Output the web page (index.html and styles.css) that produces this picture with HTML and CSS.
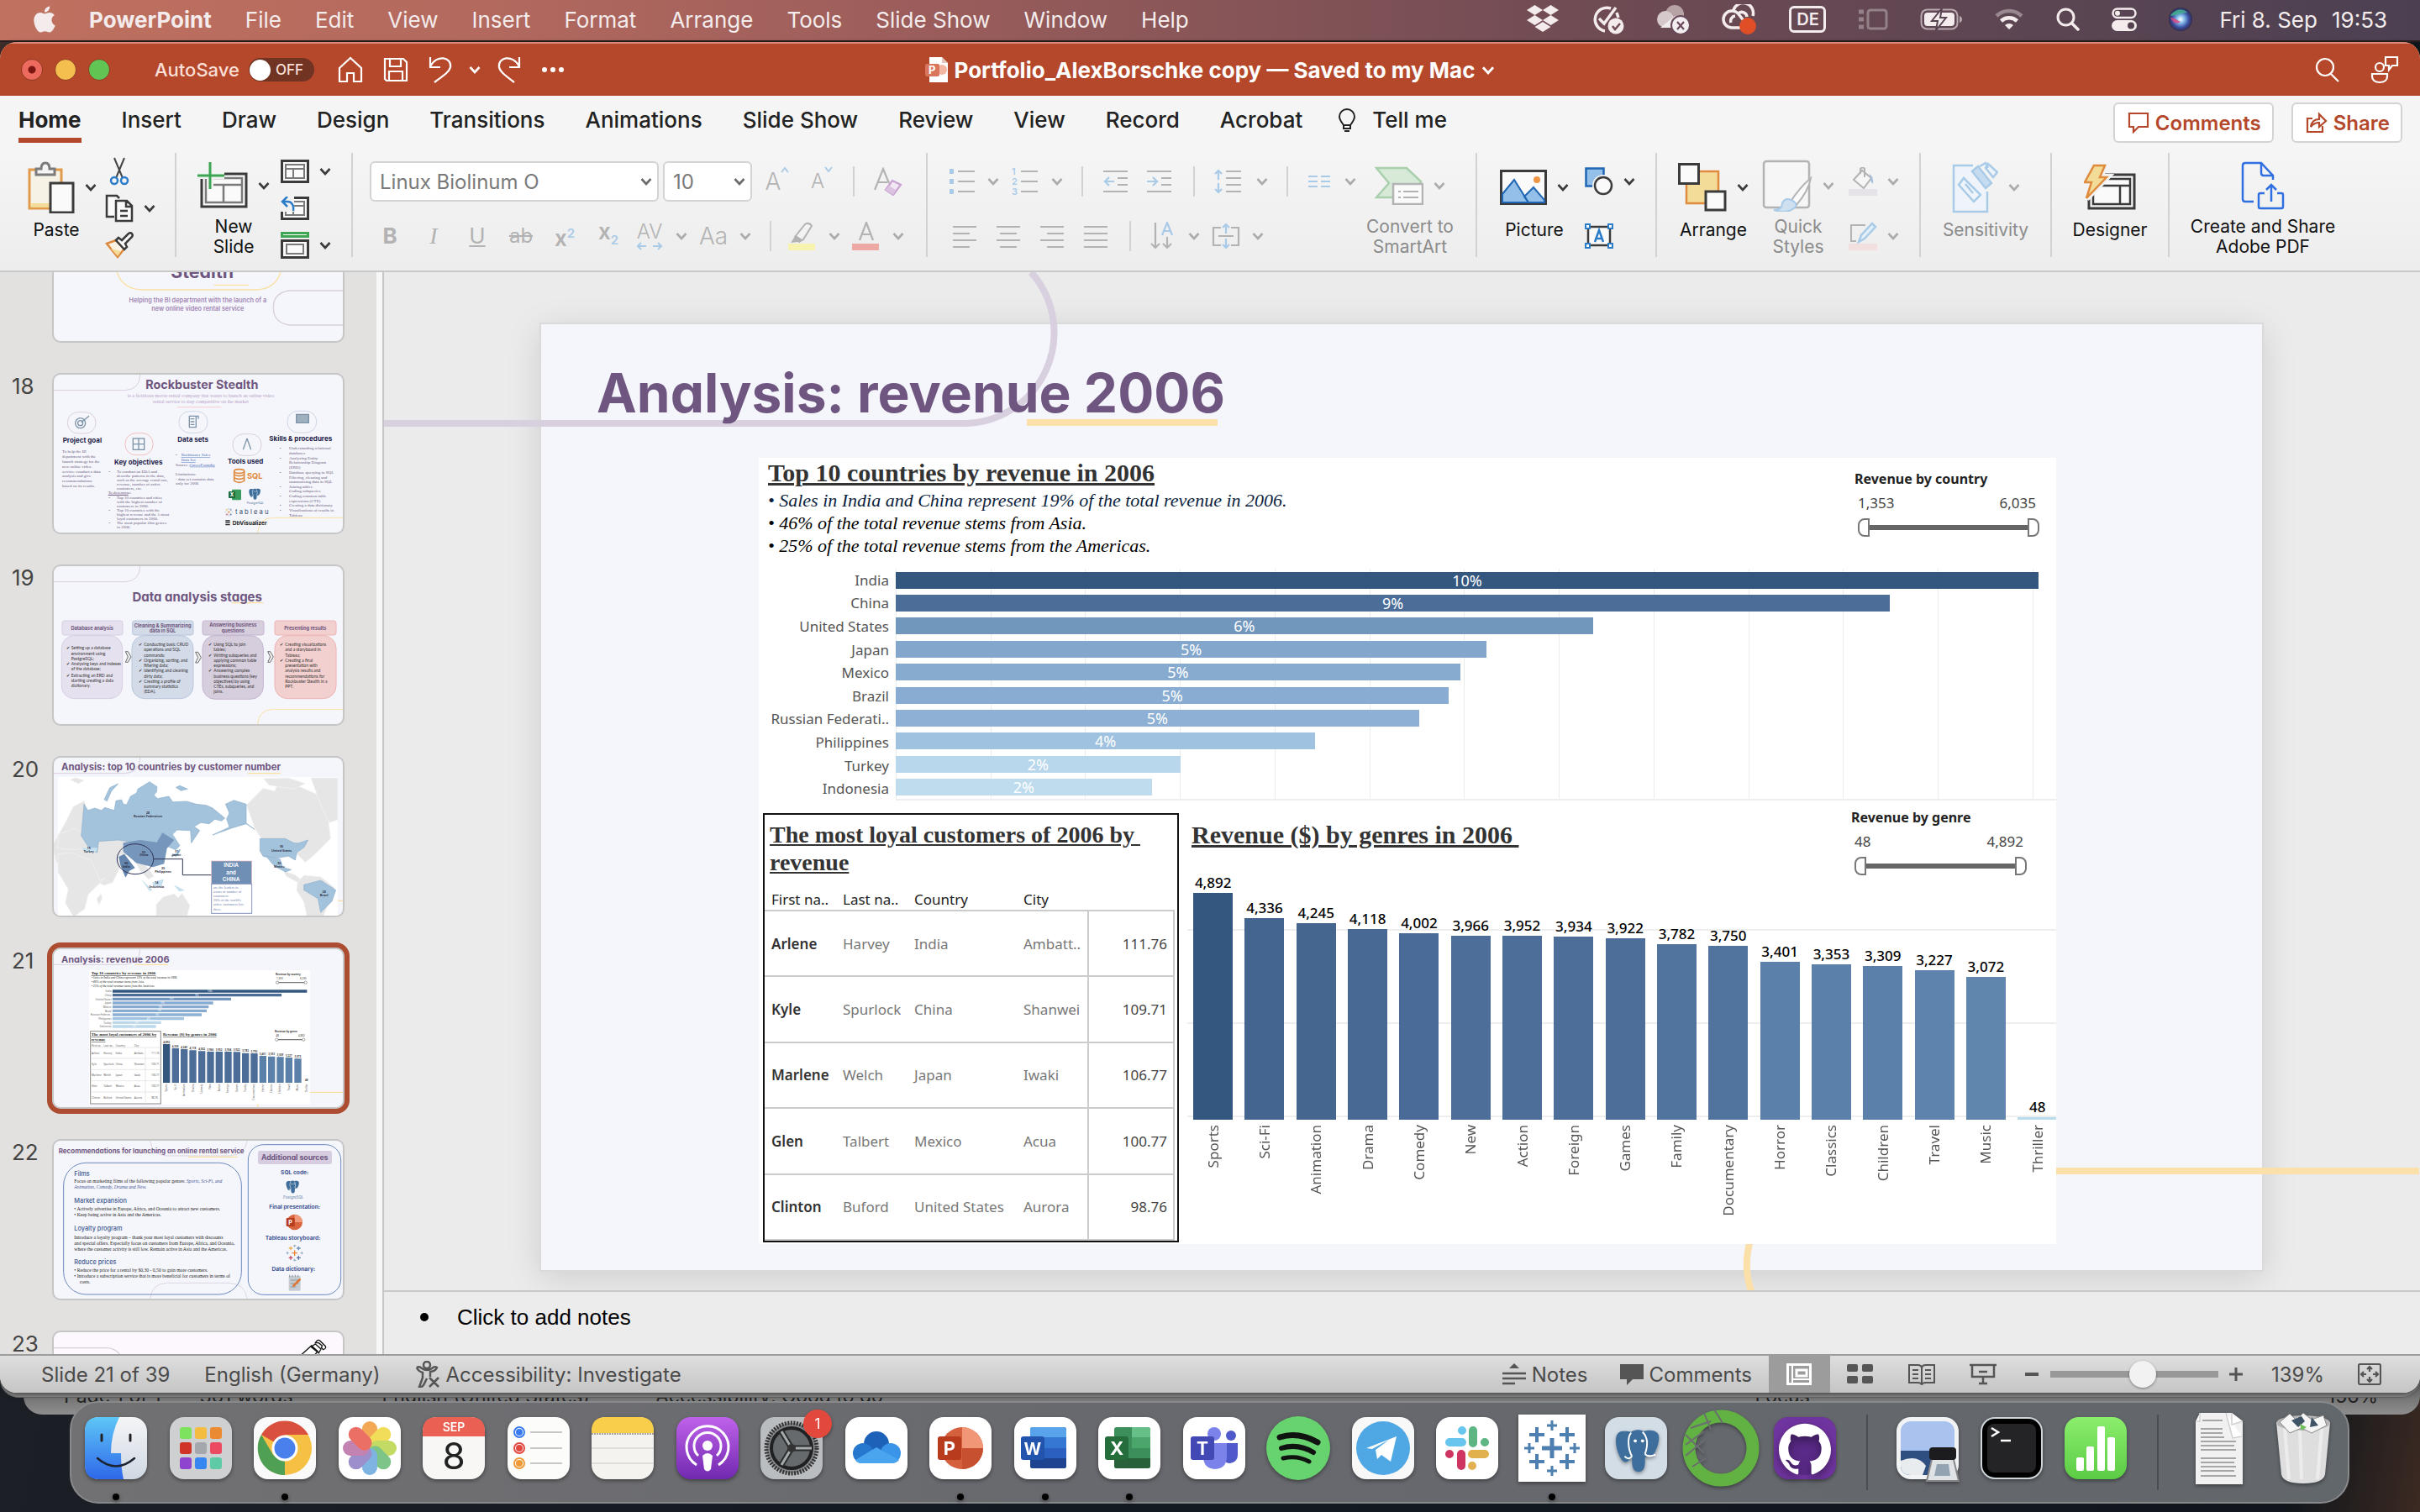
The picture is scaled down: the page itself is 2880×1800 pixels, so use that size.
FILE: index.html
```html
<!DOCTYPE html>
<html lang="en">
<head>
<meta charset="utf-8">
<title>Portfolio_AlexBorschke copy</title>
<link rel="stylesheet" href="styles.css">
</head>
<body>
<svg class="sprite" aria-hidden="true">
  <symbol id="chev" viewBox="0 0 14 10"><path d="M1.500 2l5.500 6 5.500-6" fill="none" stroke="currentColor" stroke-width="2.600"/></symbol>
  <symbol id="layout" viewBox="0 0 34 28"><rect x="1.500" y="1.500" width="31" height="25" fill="#fafafa" stroke="#3b3b3b" stroke-width="3"/><path d="M6 6h22v16H6zM6 11h22M15 11v11" fill="none" stroke="#7a7a7a" stroke-width="2"/></symbol>
  <symbol id="pg" viewBox="0 0 60 60"><path d="M13 8C4 8 3 18 5 28c2 9 6 17 10 18 4 1 5-3 9-6v4c0 9 2 14 8 14s8-5 8-12v-6c6 0 11-1 11-4 5-8 8-20 5-25-5-6-14-4-18-3-7-3-12-1-15 1-3-1-7-1-10-1z" fill="#3e6e9c"/><path d="M23 10c-5 6-4 20 1 29M37 9c6 6 7 16 3 27M40 36c3 5 9 2 13 1M24 39c-3 3-6 4-9 0" fill="none" stroke="#fff" stroke-width="2"/><circle cx="28" cy="20" r="2" fill="#fff"/><circle cx="37" cy="20" r="2" fill="#fff"/></symbol>
  <symbol id="tab" viewBox="0 0 60 60"><g fill="none" stroke-width="4"><path d="M30 20v20M20 30h20" stroke="#e8863c"/><path d="M16 6v14M9 13h14" stroke="#eab15a"/><path d="M44 6v14M37 13h14" stroke="#6b8fb8"/><path d="M16 40v14M9 47h14" stroke="#c94a5c"/><path d="M44 40v14M37 47h14" stroke="#5b6ea8"/><path d="M30 0v9M25 4h10M30 51v9M25 56h10M4 25v10M0 30h9M56 25v10M51 30h9" stroke="#8fa7bd" stroke-width="3"/></g></symbol>
</svg>

<header class="menubar">
  <nav class="menus">
    <svg class="apple" width="26" height="32" viewBox="2 0 20 24"><path fill="currentColor" d="M12.152 6.896c-.948 0-2.415-1.078-3.960-1.040-2.040.027-3.910 1.183-4.961 3.014-2.117 3.675-.546 9.103 1.519 12.090 1.013 1.454 2.208 3.090 3.792 3.039 1.520-.065 2.090-.987 3.935-.987 1.831 0 2.350.987 3.960.948 1.637-.026 2.676-1.480 3.676-2.948 1.156-1.688 1.636-3.325 1.662-3.415-.039-.013-3.182-1.221-3.220-4.857-.026-3.040 2.480-4.494 2.597-4.559-1.429-2.090-3.623-2.324-4.390-2.376-2-.156-3.675 1.090-4.610 1.090zM15.530 3.830c.843-1.012 1.400-2.427 1.245-3.830-1.207.052-2.662.805-3.532 1.818-.780.896-1.454 2.338-1.273 3.714 1.338.104 2.715-.688 3.559-1.701"/></svg>
    <b>PowerPoint</b><span>File</span><span>Edit</span><span>View</span><span>Insert</span><span>Format</span><span>Arrange</span><span>Tools</span><span>Slide Show</span><span>Window</span><span>Help</span>
  </nav>
  <div class="extras">
    <svg width="38" height="34" viewBox="0 0 38 34" fill="currentColor"><path d="M9.500 0l9.500 6-9.500 6L0 6zM28.500 0L38 6l-9.500 6L19 6zM9.500 12l9.500 6-9.500 6L0 18zM28.500 12l9.500 6-9.500 6-9.500-6zM19 20l9.500 6-9.500 6-9.500-6z"/></svg>
    <svg width="40" height="36" viewBox="0 0 40 36" fill="none" stroke="currentColor" stroke-width="3.500"><path d="M24 5A14 14 0 1 0 17 32M10 17l6 6L30 4M31 10l2 6"/><circle cx="30" cy="26" r="9.500" fill="currentColor" stroke="none"/><path d="M26 26l3 4 6-7" stroke="#6d4a54" stroke-width="2.500"/></svg>
    <svg width="40" height="36" viewBox="0 0 40 36"><circle cx="22" cy="12" r="11" fill="#b7a2a6"/><circle cx="11" cy="18" r="10" fill="#d6c9cc"/><path d="M5 28L22 14l12 6v8z" fill="#efeaec"/><circle cx="29" cy="25" r="11" fill="#f2eeef" stroke="#69485a" stroke-width="2"/><path d="M25 21l8 9M33 21l-8 9" stroke="#69485a" stroke-width="2.200"/></svg>
    <svg width="42" height="36" viewBox="0 0 42 36" fill="none" stroke="currentColor" stroke-width="3.500"><path d="M22 28H12a10 10 0 0 1 0-20c4 0 7 2 9 5l7 9M11 22a6 6 0 0 1 5-8M14 7a12 12 0 0 1 23 7M20 11a6 6 0 0 1 10 4"/><circle cx="31" cy="26" r="10" fill="#e04e27" stroke="none"/></svg>
    <span class="lang">DE</span>
    <svg width="36" height="26" viewBox="0 0 36 26" opacity=".35" fill="none" stroke="currentColor" stroke-width="3"><rect x="12" y="2" width="22" height="22" rx="3"/><path d="M1 4h6M1 13h6M1 22h6" stroke-width="5"/></svg>
    <svg width="50" height="26" viewBox="0 0 50 26"><rect x="1.500" y="1.500" width="43" height="23" rx="7" fill="none" stroke="currentColor" stroke-width="2" opacity=".6"/><rect x="5" y="5" width="36" height="16" rx="4" fill="currentColor"/><path d="M26 0L14 15h7l-2 11 12-15h-7z" fill="currentColor" stroke="#57434f" stroke-width="2"/><path d="M47 9v8q3-1 3-4t-3-4" fill="currentColor" opacity=".6"/></svg>
    <svg width="36" height="26" viewBox="0 0 36 26" fill="none" stroke="currentColor" stroke-width="4.500"><path d="M3 9a22 22 0 0 1 30 0" opacity=".4"/><path d="M8.500 15a14 14 0 0 1 19 0"/><path d="M13 20a7 7 0 0 1 10 0l-5 5z" fill="currentColor" stroke="none"/></svg>
    <svg width="28" height="28" viewBox="0 0 28 28" fill="none" stroke="currentColor" stroke-width="3"><circle cx="11.500" cy="11.500" r="9.500"/><path d="M18.500 18.500L26 26" stroke-linecap="round" stroke-width="3.500"/></svg>
    <svg width="30" height="28" viewBox="0 0 30 28"><rect x="1.500" y="1.500" width="27" height="10.500" rx="5.200" fill="none" stroke="currentColor" stroke-width="2.500"/><circle cx="7" cy="6.700" r="3" fill="currentColor"/><rect x="0" y="15" width="30" height="13" rx="6.500" fill="currentColor"/><circle cx="23" cy="21.500" r="4" fill="#54434f"/></svg>
    <svg width="28" height="28" viewBox="0 0 28 28"><defs><radialGradient id="siri"><stop offset="0" stop-color="#fff"/><stop offset=".35" stop-color="#7fb6e8"/><stop offset=".7" stop-color="#3c4fa0"/><stop offset="1" stop-color="#302b4c"/></radialGradient></defs><circle cx="14" cy="14" r="14" fill="url(#siri)"/><path d="M2 10c4-8 15-10 20-4-6 0-10 3-20 4z" fill="#45b58d" opacity=".8"/><path d="M2 12c5 0 8 3 12 5-4 3-9 2-12-5z" fill="#e0457d" opacity=".8"/></svg>
    <span class="clock"><span>Fri 8. Sep</span><span>19:53</span></span>
  </div>
</header>

<main class="window">
  <div class="titlebar">
    <div class="left">
      <div class="lights"><i class="red"></i><i class="yellow"></i><i class="green"></i></div>
      <label class="autosave">AutoSave <span class="toggle"><input type="checkbox"><span>OFF</span></span></label>
      <div class="quick">
        <button aria-label="Home"><svg width="30" height="32" viewBox="0 0 30 32"><path d="M2 14L15 2l13 12v16h-9V20h-8v10H2z"/></svg></button>
        <button aria-label="Save"><svg width="30" height="32" viewBox="0 0 30 32"><path d="M2 3h22l4 4v22H4l-2-2zM8 3v9h13V3M7 29V18h16v11"/></svg></button>
        <button aria-label="Undo"><svg width="30" height="34" viewBox="0 0 30 34"><path d="M2 2v12h12M2 13C10-2 28 2 26 14c-1 5-7 9-19 18"/></svg></button>
        <button class="mini" aria-label="Undo list"><svg width="14" height="10"><use href="#chev"/></svg></button>
        <button aria-label="Redo"><svg width="30" height="34" viewBox="0 0 30 34"><path d="M28 2v12H16M28 13C20-2 2 2 4 14c1 5 6 9 18 18"/></svg></button>
        <button aria-label="More"><svg width="28" height="8" viewBox="0 0 28 8"><g fill="#fff" stroke="none"><circle cx="4" cy="4" r="3"/><circle cx="14" cy="4" r="3"/><circle cx="24" cy="4" r="3"/></g></svg></button>
      </div>
    </div>
    <h1 class="doc"><svg width="27" height="30" viewBox="0 0 27 30"><path d="M5 0h15l7 7v23H5z" fill="#fff"/><path d="M20 0v7h7" fill="#e5c5bb"/><circle cx="20" cy="15" r="6" fill="#f2b6a3"/><rect y="8" width="17" height="15" rx="2" fill="#d9755c"/><text x="4" y="20" font-size="13" font-weight="700" fill="#fff">P</text></svg>Portfolio_AlexBorschke copy — Saved to my Mac<svg class="dc" width="16" height="11"><use href="#chev"/></svg></h1>
    <div class="right">
      <button aria-label="Search"><svg width="30" height="30" viewBox="0 0 30 30"><circle cx="12" cy="12" r="10"/><path d="M19 20l9 9"/></svg></button>
      <button aria-label="Presence"><svg width="34" height="34" viewBox="0 0 34 34"><circle cx="11" cy="14" r="5"/><path d="M2 22h18v3c0 4-3 7-9 7s-9-3-9-7zM18 2h14v10h-6l-4 5v-5h-4z"/></svg></button>
    </div>
  </div>

  <div class="tabs">
    <nav>
      <a class="on" href="#">Home</a><a href="#">Insert</a><a href="#">Draw</a><a href="#">Design</a><a href="#">Transitions</a><a href="#">Animations</a><a href="#">Slide Show</a><a href="#">Review</a><a href="#">View</a><a href="#">Record</a><a href="#">Acrobat</a>
      <a class="tell" href="#"><svg width="22" height="32" viewBox="0 0 22 32" fill="none" stroke="#222" stroke-width="2"><path d="M7 25v-4C4 17 2 14 2 11a9 9 0 0 1 18 0c0 3-2 6-5 10v4zM7 21h8M8 28h6"/></svg>Tell me</a>
    </nav>
    <div class="actions">
      <button><svg width="26" height="26" viewBox="0 0 26 26"><path d="M2 2h22v16H13l-6 6v-6H2z"/></svg>Comments</button>
      <button><svg width="26" height="26" viewBox="0 0 26 26"><path d="M8 8H2v16h18v-7M6 18c1-7 5-9 10-9V3l8 8-8 7v-5c-4 0-7 1-10 5z"/></svg>Share</button>
    </div>
  </div>

  <div class="ribbon">
    <section class="g g-clip">
      <button class="big"><span class="ic"><svg width="56" height="62" viewBox="0 0 56 62"><path d="M2 10h38v46H2z" fill="#f7f2e6" stroke="#e09a4a" stroke-width="3"/><path d="M4 50h22v5H4z" fill="#f3dc98"/><path d="M10 16V9h6q0-7 5-7t5 7h6v7z" fill="#f5f5f5" stroke="#7b7b7b" stroke-width="3"/><path d="M27 26h27v35H27z" fill="#fafafa" stroke="#3b3b3b" stroke-width="3"/></svg><svg width="14" height="10"><use href="#chev"/></svg></span>Paste</button>
      <div class="stack">
        <button aria-label="Cut"><svg width="34" height="34" viewBox="-5 0 34 34" fill="none" stroke-width="2"><path d="M6 1l10 24M18 1L8 25" stroke="#444"/><circle cx="6" cy="28" r="4" stroke="#2b7cc9" stroke-width="2.500"/><circle cx="18" cy="28" r="4" stroke="#2b7cc9" stroke-width="2.500"/></svg></button>
        <button aria-label="Copy"><svg width="34" height="34" viewBox="0 0 34 34" fill="#fafafa" stroke="#3b3b3b" stroke-width="2.500"><path d="M11 27H2V2h12l3 3M13 8h13l6 6v18H13zM25 8v7h7M18 20h9M18 26h9"/></svg><svg width="14" height="10"><use href="#chev"/></svg></button>
        <button aria-label="Format painter"><svg width="34" height="32" viewBox="0 0 34 32" fill="#fdf3e4" stroke="#dd8a3e" stroke-width="2.500"><path d="M2 14l11-4 10 10-8 10z"/><path d="M7 20l8 9 4-6z" fill="#f3dc98" stroke="none"/><path d="M13 10l3-3 4 3 8-8c3-2 6 1 4 4l-8 8 2 4-3 3z" fill="#fafafa" stroke="#3b3b3b"/></svg></button>
      </div>
    </section>
    <section class="g g-slide">
      <button class="big"><span class="ic"><svg width="60" height="56" viewBox="0 0 60 56"><rect x="5" y="14" width="53" height="39" fill="#fafafa" stroke="#3b3b3b" stroke-width="3"/><path d="M10 19h43v29H10zM10 27h43M31 27v21" fill="none" stroke="#7a7a7a" stroke-width="2.500"/><path d="M0 16h32M15 0v32" stroke="#f2f2f2" stroke-width="8"/><path d="M0 16h32M15 0v32" stroke="#3ea652" stroke-width="3"/></svg><svg width="14" height="10"><use href="#chev"/></svg></span>New<br>Slide</button>
      <div class="stack">
        <button aria-label="Layout"><svg width="34" height="28"><use href="#layout"/></svg><svg width="14" height="10"><use href="#chev"/></svg></button>
        <button aria-label="Reset"><svg width="34" height="28" viewBox="0 0 34 28"><use href="#layout" width="34" height="28"/><path d="M0 0h16v18H0z" fill="#f2f2f2"/><path d="M8 0L2 6l6 6M2 6h6c5 0 8 4 7 11" fill="none" stroke="#2b7cc9" stroke-width="2.500"/></svg></button>
        <button aria-label="Section"><svg width="34" height="32" viewBox="0 0 34 32"><rect x="1.500" y="1.500" width="31" height="4" fill="#fff" stroke="#3ea652" stroke-width="3"/><rect x="1.500" y="10.500" width="31" height="20" fill="#fafafa" stroke="#3b3b3b" stroke-width="3"/><rect x="7" y="15" width="20" height="11" fill="none" stroke="#7a7a7a" stroke-width="2"/></svg><svg width="14" height="10"><use href="#chev"/></svg></button>
      </div>
    </section>
    <section class="g g-font off">
      <div class="row">
        <label class="combo wide"><select aria-label="Font"><option>Linux Biolinum O</option></select><svg width="14" height="10"><use href="#chev"/></svg></label>
        <label class="combo"><select aria-label="Size"><option>10</option></select><svg width="14" height="10"><use href="#chev"/></svg></label>
        <button class="c60"><span class="thin">A</span><svg class="up" width="10" height="8" viewBox="0 0 10 8"><path d="M1 7l4-5 4 5" fill="none" stroke="#a9cbe8" stroke-width="2"/></svg></button>
        <button class="c46"><span class="thin sm">A</span><svg class="up" width="10" height="8" viewBox="0 0 10 8"><path d="M1 1l4 5 4-5" fill="none" stroke="#a9cbe8" stroke-width="2"/></svg></button>
        <i class="bar"></i>
        <button class="c52" aria-label="Clear formatting"><svg width="34" height="34" viewBox="0 0 34 34" fill="none" stroke="#b3b3b3" stroke-width="2.200"><path d="M1 27L11 2l7 17M5 18h11"/><path d="M22 16l10 5-9 12-9-6z" fill="#f2e8f4" stroke="#c9a3d2"/><path d="M14 27l4-5 8 5-3 6z" fill="#dcc3e2" stroke="none"/></svg></button>
      </div>
      <div class="row">
        <button class="c52"><b>B</b></button><button class="c52"><em>I</em></button><button class="c52"><u>U</u></button><button class="c52"><s>ab</s></button>
        <button class="c52"><span class="xx">x<sup>2</sup></span></button><button class="c52"><span class="xx">x<sub>2</sub></span></button>
        <button class="c46 av"><span class="thin">AV</span><svg width="32" height="10" viewBox="0 0 32 10" fill="none" stroke="#a9cbe8" stroke-width="2"><path d="M12 5H2M6 1L2 5l4 4M20 5h10M26 1l4 4-4 4"/></svg></button><button class="c30" aria-label="Spacing list"><svg width="14" height="10"><use href="#chev"/></svg></button>
        <button class="c46"><span class="thin">Aa</span></button><button class="c30" aria-label="Case list"><svg width="14" height="10"><use href="#chev"/></svg></button>
        <i class="bar"></i>
        <button class="c46" aria-label="Highlight"><svg width="34" height="34" viewBox="0 0 34 34"><path d="M8 18L20 3q5-3 8 2L18 21l-5 3z" fill="#f2f2f2" stroke="#b3b3b3" stroke-width="2"/><path d="M9 16l9 6-7 2-8 1z" fill="#b3b3b3"/><rect y="26" width="32" height="8" fill="#f6f3b0"/></svg></button><button class="c30" aria-label="Highlight list"><svg width="14" height="10"><use href="#chev"/></svg></button>
        <button class="c46" aria-label="Font color"><svg width="34" height="34" viewBox="0 0 34 34"><path d="M9 22L17 1l8 21M12 15h10" fill="none" stroke="#b3b3b3" stroke-width="2.200"/><rect y="26" width="32" height="8" fill="#edaaa4"/></svg></button><button class="c30" aria-label="Color list"><svg width="14" height="10"><use href="#chev"/></svg></button>
      </div>
    </section>
    <section class="g g-para off">
      <div>
        <div class="row">
          <button class="c46" aria-label="Bullets"><svg width="32" height="30" viewBox="0 0 32 30"><path d="M11 3h20M11 15h20M11 27h20" stroke="#b3b3b3" stroke-width="2.200"/><path d="M1 3h5M1 15h5M1 27h5" stroke="#a9cbe8" stroke-width="6"/></svg></button><button class="c30" aria-label="Bullets list"><svg width="14" height="10"><use href="#chev"/></svg></button>
          <button class="c46" aria-label="Numbering"><svg width="32" height="40" viewBox="0 -4 32 40"><path d="M11 4h20M11 16h20M11 28h20" stroke="#b3b3b3" stroke-width="2.200"/><g font-size="11" font-weight="600" fill="#a9cbe8"><text y="8">1</text><text y="20">2</text><text y="32">3</text></g></svg></button><button class="c30" aria-label="Numbering list"><svg width="14" height="10"><use href="#chev"/></svg></button>
          <i class="bar"></i>
          <button class="c52" aria-label="Decrease indent"><svg width="30" height="28" viewBox="0 0 30 28" fill="none" stroke="#b3b3b3" stroke-width="2.200"><path d="M0 2h29M17 10h12M17 18h12M0 26h29"/><path d="M13 14H2M7 9l-5 5 5 5" stroke="#a9cbe8"/></svg></button>
          <button class="c52" aria-label="Increase indent"><svg width="30" height="28" viewBox="0 0 30 28" fill="none" stroke="#b3b3b3" stroke-width="2.200"><path d="M0 2h29M17 10h12M17 18h12M0 26h29"/><path d="M0 14h11M7 9l5 5-5 5" stroke="#a9cbe8"/></svg></button>
          <i class="bar"></i>
          <button class="c52" aria-label="Line spacing"><svg width="32" height="30" viewBox="0 0 32 30" fill="none" stroke="#b3b3b3" stroke-width="2.200"><path d="M14 3h18M14 11h18M14 19h18M14 27h18"/><path d="M5 2v11M1 6l4-4 4 4M5 28V17M1 24l4 4 4-4" stroke="#a9cbe8"/></svg></button><button class="c30" aria-label="Line spacing list"><svg width="14" height="10"><use href="#chev"/></svg></button>
          <i class="bar"></i>
          <button class="c46" aria-label="Columns"><svg width="26" height="16" viewBox="0 0 26 16"><path d="M0 2h11M0 8h11M0 14h11M15 2h11M15 8h11M15 14h11" stroke="#a9cbe8" stroke-width="2.200"/></svg></button><button class="c30" aria-label="Columns list"><svg width="14" height="10"><use href="#chev"/></svg></button>
        </div>
        <div class="row">
          <button class="c52" aria-label="Left"><svg width="30" height="28" viewBox="0 0 30 28"><path d="M1 3h28M1 11h20M1 19h28M1 27h20" stroke="#b3b3b3" stroke-width="2.200"/></svg></button>
          <button class="c52" aria-label="Center"><svg width="30" height="28" viewBox="0 0 30 28"><path d="M1 3h28M5 11h20M1 19h28M5 27h20" stroke="#b3b3b3" stroke-width="2.200"/></svg></button>
          <button class="c52" aria-label="Right"><svg width="30" height="28" viewBox="0 0 30 28"><path d="M1 3h28M9 11h20M1 19h28M9 27h20" stroke="#b3b3b3" stroke-width="2.200"/></svg></button>
          <button class="c52" aria-label="Justify"><svg width="30" height="28" viewBox="0 0 30 28"><path d="M1 3h28M1 11h28M1 19h28M1 27h28" stroke="#b3b3b3" stroke-width="2.200"/></svg></button>
          <i class="bar"></i>
          <button class="c46" aria-label="Text direction"><svg width="28" height="34" viewBox="0 0 28 34" fill="none" stroke="#b3b3b3" stroke-width="2.200"><path d="M6 1v30M1 26l5 5 5-5M20 18v13M15 26l5 5 5-5"/><path d="M14 16l6-15 6 15M16 11h8" stroke="#a9cbe8"/></svg></button><button class="c30" aria-label="Direction list"><svg width="14" height="10"><use href="#chev"/></svg></button>
          <button class="c46" aria-label="Align text"><svg width="34" height="32" viewBox="0 0 34 32" fill="none" stroke="#b3b3b3" stroke-width="2.200"><path d="M11 6H2v21h9M23 6h9v21h-9M8 16h18"/><path d="M17 13V2M13 6l4-4 4 4M17 19v11M13 26l4 4 4-4" stroke="#a9cbe8"/></svg></button><button class="c30" aria-label="Align list"><svg width="14" height="10"><use href="#chev"/></svg></button>
        </div>
      </div>
      <button class="big"><span class="ic"><svg width="58" height="46" viewBox="0 0 58 46"><path d="M2 2h36l17 16-9 19H2l15-17z" fill="#d7ead8" stroke="#a9cfad" stroke-width="2.500"/><rect x="22" y="21" width="35" height="24" fill="#fafafa" stroke="#b3b3b3" stroke-width="2.500"/><path d="M28 30h3M34 30h18M28 37h3M34 37h18" stroke="#b3b3b3" stroke-width="2.200"/></svg><svg width="14" height="10"><use href="#chev"/></svg></span>Convert to<br>SmartArt</button>
    </section>
    <section class="g g-pic">
      <button class="big"><span class="ic"><svg width="56" height="42" viewBox="0 0 56 42"><rect x="1.500" y="1.500" width="53" height="39" fill="#fafafa" stroke="#3b3b3b" stroke-width="3"/><path d="M3 29L17 12l17 27H3zM29 32l11-11 13 15v3H34z" fill="#93bfe8" stroke="#1f66b5" stroke-width="2"/><circle cx="44" cy="12" r="4" fill="#ee9444"/></svg><svg width="14" height="10"><use href="#chev"/></svg></span>Picture</button>
      <div class="stack two">
        <button aria-label="Shapes"><svg width="34" height="34" viewBox="0 0 34 34"><rect x="1.500" y="1.500" width="21" height="21" fill="#93bfe8" stroke="#1f66b5" stroke-width="2.500"/><circle cx="22" cy="22" r="13" fill="#f2f2f2"/><circle cx="22" cy="22" r="10" fill="#fafafa" stroke="#3b3b3b" stroke-width="2.500"/></svg><svg width="14" height="10"><use href="#chev"/></svg></button>
        <button aria-label="Text box"><svg width="34" height="30" viewBox="0 0 34 30"><rect x="4" y="4" width="26" height="22" fill="#fafafa" stroke="#3b3b3b" stroke-width="2.500"/><path d="M12 22l5-14 5 14M13.500 18h7" fill="none" stroke="#2b7cc9" stroke-width="2.500"/><g fill="#fff" stroke="#2b7cc9" stroke-width="2"><rect x="1" y="1" width="5" height="5"/><rect x="28" y="1" width="5" height="5"/><rect x="1" y="24" width="5" height="5"/><rect x="28" y="24" width="5" height="5"/></g></svg></button>
      </div>
    </section>
    <section class="g g-arr">
      <button class="big"><span class="ic"><svg width="58" height="58" viewBox="0 0 58 58"><rect x="10" y="10" width="38" height="38" fill="#f3dc98" stroke="#e08a3e" stroke-width="2.500"/><rect x="1.500" y="1.500" width="23" height="23" fill="#fafafa" stroke="#3b3b3b" stroke-width="3"/><rect x="33" y="34" width="23" height="22" fill="#fafafa" stroke="#3b3b3b" stroke-width="3"/></svg><svg width="14" height="10"><use href="#chev"/></svg></span>Arrange</button>
      <button class="big off"><span class="ic"><svg width="60" height="62" viewBox="0 0 60 62"><rect x="2" y="2" width="54" height="55" rx="3" fill="#f6f6f6" stroke="#b3b3b3" stroke-width="2.500"/><path d="M58 22q-14 12-24 28l6 5Q55 38 58 22z" fill="#fafafa" stroke="#b3b3b3" stroke-width="2"/><path d="M14 60q10 0 10-8 3-7 11-4 8 4 4 9-8 8-25 3z" fill="#cfe0f0" stroke="#a9cbe8" stroke-width="2"/></svg><svg width="14" height="10"><use href="#chev"/></svg></span>Quick<br>Styles</button>
      <div class="stack two off">
        <button aria-label="Fill"><svg width="34" height="34" viewBox="0 0 34 34"><path d="M6 15L16 4l11 9-9 12z M14 8V2q3-3 5 0v10" fill="#f6f6f6" stroke="#b3b3b3" stroke-width="2"/><path d="M24 8q6 2 5 12-4-3-3-9z" fill="#a9bfe0"/><rect y="26" width="34" height="8" fill="#e6e2ea"/></svg><svg width="14" height="10"><use href="#chev"/></svg></button>
        <button aria-label="Outline"><svg width="34" height="34" viewBox="0 0 34 34"><path d="M20 4H3v19h6" fill="none" stroke="#b3b3b3" stroke-width="2"/><path d="M12 24l3-8L28 2l4 4-13 14z" fill="#e3eff9" stroke="#a9cbe8" stroke-width="2.500"/><rect y="26" width="34" height="8" fill="#f2e0e0"/></svg><svg width="14" height="10"><use href="#chev"/></svg></button>
      </div>
    </section>
    <section class="g g-mid off">
      <button class="big"><span class="ic"><svg width="56" height="62" viewBox="0 0 56 62" fill="#eef4fa" stroke="#a9cbe8" stroke-width="2.500"><path d="M26 5H3v55h40V36"/><path d="M15 20l20 20-8 8L9 28z M17 27l9 11"/><path d="M32 6l16 20-7 6-16-20z" fill="#c5dcf0"/><path d="M34 6l7-4 3 6M44 3l11 10-5 6-9-11z"/></svg><svg width="14" height="10"><use href="#chev"/></svg></span>Sensitivity</button>
    </section>
    <section class="g g-mid">
      <button class="big"><span class="ic"><svg width="62" height="56" viewBox="0 0 62 56"><rect x="6" y="13" width="54" height="40" fill="#fafafa" stroke="#3b3b3b" stroke-width="3"/><path d="M11 18h44v30H11zM11 26h44M43 26v22" fill="none" stroke="#3b3b3b" stroke-width="2.500"/><path d="M12 2h13l-6 14h8L3 41l6-19H1z" fill="#f3dc98" stroke="#f2f2f2" stroke-width="8"/><path d="M12 2h13l-6 14h8L3 41l6-19H1z" fill="#f3dc98" stroke="#e08a3e" stroke-width="2.500"/></svg></span>Designer</button>
    </section>
    <section class="g g-mid last">
      <button class="big"><span class="ic"><svg width="52" height="58" viewBox="0 0 52 58" fill="none" stroke="#2f6fe0" stroke-width="2.500"><path d="M15 48H5q-3 0-3-3V5q0-3 3-3h19l14 15v5M24 2v12q0 3 3 3h11M28 38h-5q-2 0-2 2v14q0 2 2 2h25q2 0 2-2V40q0-2-2-2h-5M36 48V28M30 34l6-6 6 6"/></svg></span>Create and Share<br>Adobe PDF</button>
    </section>
  </div>

  <div class="body">
    <aside class="thumbs">
      <ol>
        <li><span class="n"></span><svg class="thumb" viewBox="0 0 1032 564">
          <g fill="none" stroke-width="4"><path d="M218 260v20q10 101 100 101h400q90 0 100-101v-20" stroke="#fbe0a4"/><path d="M1032 384H840q-56 8-56 61t56 62h192" stroke="#d8cfdf"/></g>
          <path d="M572 364h124" stroke="#fbe0a4" stroke-width="4"/>
          <text class="h" x="530" y="339" font-size="64" text-anchor="middle">Stealth</text>
          <g font-size="22" font-weight="600" fill="#a287b4" text-anchor="middle"><text x="514" y="427">Helping the BI department with the launch of a</text><text x="514" y="457">new online video rental service</text></g></svg></li>
        <li><span class="n">18</span><svg class="thumb" viewBox="0 0 1032 564">
          <path d="M0 56h255q53-4 53-56" fill="none" stroke="#d8cfdf" stroke-width="3"/><path d="M728 564q4-52 56-53h248" fill="none" stroke="#fbe0a4" stroke-width="3"/><path d="M440 116h158" stroke="#f4cdcd" stroke-width="3"/>
          <text class="h" x="529" y="51" font-size="43" text-anchor="middle">Rockbuster Stealth</text>
          <g font-size="18" fill="#b9a3c8" text-anchor="middle" font-family="Liberation Serif"><text x="525" y="82">is a fictitious movie rental company that wants to launch an online video</text><text x="525" y="102">rental service to stay competitive on the market</text></g>
          <g fill="none" stroke-width="3"><rect x="49" y="134" width="101" height="76" rx="37" stroke="#d8cfdf"/><rect x="255" y="209" width="99" height="78" rx="37" stroke="#f1c0c0"/><rect x="447" y="131" width="102" height="77" rx="37" stroke="#ccd6e6"/><rect x="639" y="212" width="102" height="77" rx="37" stroke="#d8cfdf"/><rect x="834" y="130" width="104" height="77" rx="37" stroke="#ccd6e6"/></g>
          <g fill="none" stroke="#7d94a8" stroke-width="4"><circle cx="95" cy="173" r="18"/><circle cx="95" cy="173" r="9"/><path d="M98 170l28-22"/><rect x="283" y="228" width="40" height="40"/><path d="M303 228v40M283 248h40"/><path d="M484 148h24v40h-24zM488 158h14M488 168h14M488 178h14M508 148h8v10"/><path d="M690 228l-14 40M690 228l14 40"/><path d="M866 142h44v30h-44z" fill="#9fb0be"/></g>
          <g class="nv" font-size="24"><text x="32" y="244">Project goal</text><text x="216" y="321">Key objectives</text><text x="442" y="240">Data sets</text><text x="621" y="318">Tools used</text><text x="769" y="237">Skills &amp; procedures</text></g>
          <g class="bd" font-size="15"><text x="30" y="280">To help the BI</text><text x="30" y="298">department with the</text><text x="30" y="315">launch strategy for the</text><text x="30" y="332">new online video</text><text x="30" y="350">service: conduct a data</text><text x="30" y="367">analysis and give</text><text x="30" y="384">recommendations</text><text x="30" y="402">based on its results.</text>
          <text x="196" y="350">•</text><text x="225" y="350">To conduct an EDA and</text><text x="225" y="365">describe patterns in the data,</text><text x="225" y="380">such as the average rental rate,</text><text x="225" y="395">revenue, number of active</text><text x="225" y="410">customers, etc.</text><text x="194" y="427">To determine:</text><text x="196" y="443">•</text><text x="225" y="443">Top 10 countries and cities</text><text x="225" y="458">with the highest number of</text><text x="225" y="473">customers in 2006.</text><text x="196" y="488">•</text><text x="225" y="488">Top 10 countries with the</text><text x="225" y="503">highest revenue and the 5 most</text><text x="225" y="518">loyal customers in 2006.</text><text x="196" y="533">•</text><text x="225" y="533">The most popular film genres</text><text x="225" y="548">in 2006.</text>
          <text x="435" y="292">•</text><text class="lk" x="455" y="292">Rockbuster Sales</text><text class="lk" x="455" y="309">Data Set</text><text x="435" y="326">Source: <tspan class="lk">CareerFoundry</tspan></text><text x="435" y="361">Limitations:</text><text x="435" y="377">- data set contains data</text><text x="435" y="394">only for 2006</text>
          <text x="806" y="268">•</text><text x="840" y="268">Understanding relational</text><text x="840" y="286">databases</text><text x="806" y="304">•</text><text x="840" y="304">Analyzing Entity</text><text x="840" y="319">Relationship Diagram</text><text x="840" y="336">(ERD)</text><text x="806" y="355">•</text><text x="840" y="355">Database querying in SQL</text><text x="840" y="371">Filtering, cleaning and</text><text x="840" y="388">summarizing data in SQL</text><text x="806" y="405">•</text><text x="840" y="405">Joining tables</text><text x="840" y="421">Coding subqueries</text><text x="806" y="439">•</text><text x="840" y="439">Coding common table</text><text x="840" y="456">expressions (CTE)</text><text x="806" y="472">•</text><text x="840" y="472">Creating a data dictionary</text><text x="806" y="490">•</text><text x="840" y="490">Visualizations of results in</text><text x="840" y="507">Tableau</text></g>
          <path d="M194 430h72" stroke="#6f5680" stroke-width="3"/>
          <g fill="none" stroke="#e08a3e" stroke-width="5"><ellipse cx="662" cy="345" rx="18" ry="7"/><path d="M644 345v34q18 12 36 0v-34M644 357q18 10 36 0M644 368q18 10 36 0"/></g><text x="690" y="373" font-size="28" font-weight="700" fill="#e08a3e">SQL</text>
          <rect x="636" y="410" width="33" height="38" rx="3" fill="#3a9b5c"/><rect x="624" y="417" width="24" height="24" rx="2" fill="#1d6b3a"/><text x="629" y="436" font-size="18" font-weight="700" fill="#fff">X</text><svg x="694" y="402" width="46" height="46"><use href="#pg"/></svg><text x="689" y="462" font-size="11" fill="#55779c">PostgreSQL</text>
          <svg x="610" y="476" width="30" height="30"><use href="#tab"/></svg><text x="648" y="498" font-size="23" fill="#34476b">t a b l e a u</text><text x="638" y="536" font-size="20" font-weight="700" fill="#222">DbVisualizer</text><path d="M613 522h16M613 529h16M613 536h16" stroke="#222" stroke-width="4"/></svg></li>
        <li><span class="n">19</span><svg class="thumb" viewBox="0 0 1032 564">
          <path d="M0 56h255q53-4 53-56" fill="none" stroke="#d8cfdf" stroke-width="3"/><path d="M728 564q4-52 56-53h248" fill="none" stroke="#fbe0a4" stroke-width="3"/><path d="M634 131h114" stroke="#fbe0a4" stroke-width="4"/>
          <text class="h" x="512" y="125" font-size="45" text-anchor="middle">Data analysis stages</text>
          <g stroke-width="3"><g fill="#e6e1ee" stroke="#d6cde2"><rect x="30" y="195" width="216" height="51" rx="8"/><rect x="28" y="248" width="217" height="225" rx="45"/></g><g fill="#d3dae8" stroke="#b8c6dd"><rect x="281" y="195" width="217" height="51" rx="8"/><rect x="279" y="248" width="219" height="225" rx="45"/></g><g fill="#d6cddd" stroke="#c4b5d0"><rect x="531" y="195" width="219" height="51" rx="8"/><rect x="531" y="248" width="217" height="227" rx="45"/></g><g fill="#f3d0d0" stroke="#ecb4b4"><rect x="789" y="195" width="219" height="51" rx="8"/><rect x="789" y="248" width="219" height="225" rx="45"/></g></g>
          <g fill="#6f5680" font-size="17" font-weight="700" text-anchor="middle"><text x="137" y="228">Database analysis</text><text x="389" y="219">Cleaning &amp; Summarizing</text><text x="389" y="236">data in SQL</text><text x="640" y="216">Answering business</text><text x="640" y="236">questions</text><text x="898" y="228">Presenting results</text></g>
          <g fill="#eee" stroke="#6c6c6c" stroke-width="3"><path d="M256 305h9l11 19-11 19h-9l9-19zM506 307h9l11 19-11 19h-9l9-19zM764 305h9l11 19-11 19h-9l9-19z"/></g>
          <g class="bd dk" font-size="15"><text x="44" y="298">✔</text><text x="62" y="298">Setting up a database</text><text x="62" y="318">environment using</text><text x="62" y="336">PostgreSQL;</text><text x="44" y="354">✔</text><text x="62" y="354">Analysing keys and indexes</text><text x="62" y="373">of the database;</text><text x="44" y="396">✔</text><text x="62" y="396">Extracting an ERD and</text><text x="62" y="414">starting creating a data</text><text x="62" y="432">dictionary.</text>
          <text x="304" y="284">✔</text><text x="322" y="284">Conducting basic CRUD</text><text x="322" y="303">operations and SQL</text><text x="322" y="323">commands;</text><text x="304" y="342">✔</text><text x="322" y="342">Organizing, sorting, and</text><text x="322" y="360">filtering data;</text><text x="304" y="379">✔</text><text x="322" y="379">Identifying and cleaning</text><text x="322" y="398">dirty data;</text><text x="304" y="417">✔</text><text x="322" y="417">Creating a profile of</text><text x="322" y="435">summary statistics</text><text x="322" y="453">(EDA).</text>
          <text x="553" y="284">✔</text><text x="571" y="284">Using SQL to join</text><text x="571" y="303">tables;</text><text x="553" y="323">✔</text><text x="571" y="323">Writing subqueries and</text><text x="571" y="342">applying common table</text><text x="571" y="360">expressions;</text><text x="553" y="379">✔</text><text x="571" y="379">Answering complex</text><text x="571" y="398">business questions (key</text><text x="571" y="417">objectives) by using</text><text x="571" y="435">CTEs, subqueries, and</text><text x="571" y="453">joins.</text>
          <text x="808" y="284">✔</text><text x="826" y="284">Creating visualizations</text><text x="826" y="303">and a storyboard in</text><text x="826" y="323">Tableau;</text><text x="808" y="342">✔</text><text x="826" y="342">Creating a final</text><text x="826" y="360">presentation with</text><text x="826" y="379">analysis results and</text><text x="826" y="398">recommendations for</text><text x="826" y="417">Rockbuster Stealth in a</text><text x="826" y="435">PPT.</text></g></svg></li>
        <li><span class="n">20</span><svg class="thumb" viewBox="192 96 1032 564">
          <path d="M192 152h255q53-4 53-56" fill="none" stroke="#d8cfdf" stroke-width="3"/><path d="M886 152h116M1200 607h24" stroke="#fbe0a4" stroke-width="4"/><rect x="207" y="165" width="999" height="495" fill="#fff"/>
          <g fill="#e6e6e6" stroke="#f4f4f4" stroke-width="2"><path d="M232 330l30-60 40-20 10 60-10 70 30 30 80-50 60 10 90-10 60 20-60 40-30-8-80 30-30 60-20 40-30 10-70-30-20-30-80-20-16-60z"/><path d="M207 370l60-20 50 20 15 40-60 15-65-5z"/><path d="M207 440l50-5 70 30 30 70 18-10-60 60-12 50-40 30-30-50 10-50-36-60z"/><path d="M345 600l16-18 4 18-12 22zM250 175l20-8 30 10-20 12z"/><path d="M880 265l60-60 40 10 20-40 40 30 20-10 90 40 20 60 10 90-60 60-30 25-40-40-100-20-40-60z"/><path d="M940 170l90-2 60 20-40 20-90-14z"/><path d="M1110 168h96v150l-30 10-30-60z"/><path d="M558 620l24-26 40-12 14 14 14-16 28 44-10 36h-110z"/><path d="M1012 500l40 14 30 22-10 10-50-26z"/><path d="M1062 540l23-24 60 5 50 40-40 100h-60l-10-50-26-40z"/><path d="M480 460l40 20 30 40-20 10-30-30z"/></g>
          <g fill="#a3c2dc" stroke="#8fb0cc" stroke-width="2"><path d="M300 262l14 22 24-8 24 8 12-10 34 10 6-34 20-4 6 16 12 2 14-30 22-12 4-14 42-26 27 18-2 18-10 12 14 12 40-8 14 20 50-2 34 10 36 4 22 10 44 36-12 10-24-6-20 16-30-4-24 14 20 14-30 45-3-45-48-2-16 16 26 40-15 15-35-15-10-20-30 15-60-5-70-10-70 5-5 40-25-10-32-50z"/><path d="M372 245l20-42 30-14-24 26-16 36zM628 202l14-6 28 12-24 6z"/><path d="M805 262l30-14 44 14v68l30 22-30-20-50 15-70 25 60-28-10-30 10-20z"/><path d="M928 385h90l30 15 16 2 36-12-14 26-26 18-6 28-24-14-40 6-50-5-12-20z"/><path d="M950 448l50 10 10 30 30 8-20 8-40-20z"/><path d="M1085 550l60-16 54 35-14 40-40 40-10-50-50-30z"/></g>
          <g fill="#c6e0ef"><path d="M292 418h56l-4 14h-44zM505 530l40 40-12 2zM545 540l40-10-10 28-30-6zM620 550l40 20-20 4z"/></g><path d="M612 446l22-6 8-16" fill="none" stroke="#8cb0d0" stroke-width="6"/>
          <path d="M440 400l60-10 60 8 20-34 42 26-26 30-10 55-40 12-60-15-46-40z" fill="#7696bb"/><path d="M424 450l20-10 38 50-20 10-14 24-18-44z" fill="#6385ae"/>
          <g fill="none" stroke="#2e3456" stroke-width="3"><ellipse cx="483" cy="458" rx="65" ry="54"/><path d="M548 458h104v57h104"/></g>
          <rect x="755" y="465" width="144" height="82" fill="#6f8fb5" stroke="#e7b9c0" stroke-width="2"/><rect x="755" y="547" width="144" height="105" fill="#fff" stroke="#8795c0" stroke-width="3"/>
          <g fill="#fff" font-size="19" font-weight="600" text-anchor="middle"><text x="825" y="486">INDIA</text><text x="825" y="512">and</text><text x="825" y="537">CHINA</text></g>
          <g fill="#6d7fb0" font-size="13" font-family="Liberation Serif"><text x="762" y="564">are the leaders in</text><text x="762" y="579">terms of number of</text><text x="762" y="594">customers.</text><text x="762" y="609">20% of the world's</text><text x="762" y="624">active customers live</text><text x="762" y="641">there.</text></g>
          <g fill="#223" font-size="11" font-weight="600" text-anchor="middle" font-family="Noto Sans"><text x="528" y="298">28</text><text x="528" y="309">Russian Federation</text><text x="513" y="437">53</text><text x="514" y="448">China</text><text x="451" y="476">60</text><text x="450" y="489">India</text><text x="317" y="423">15</text><text x="317" y="435">Turkey</text><text x="631" y="434">31</text><text x="631" y="446">Japan</text><text x="582" y="496">20</text><text x="582" y="508">Philippines</text><text x="559" y="547">14</text><text x="559" y="560">Indonesia</text><text x="1005" y="418">36</text><text x="1005" y="431">United States</text><text x="997" y="477">30</text><text x="997" y="490">Mexico</text><text x="1157" y="580">28</text><text x="1157" y="592">Brazil</text></g>
          <text class="h" x="219" y="141" font-size="34">Analysis: top 10 countries by customer number</text></svg></li>
        <li class="sel"><span class="n">21</span><svg class="thumb" viewBox="192 780 1032 564">
          <path d="M192 835h255q53-4 53-56" fill="none" stroke="#d8cfdf" stroke-width="3"/><path d="M482 835h117M1107 1291h117M920 1334v12" stroke="#fbe0a4" stroke-width="4"/><rect x="318" y="855" width="789" height="479" fill="#fff"/>
          <text class="h" x="219" y="828" font-size="33">Analysis: revenue 2006</text>
          <g font-family="Liberation Serif" fill="#222"><g font-size="15" font-weight="700" text-decoration="underline"><text x="326" y="871">Top 10 countries by revenue in 2006</text><text x="326" y="1090">The most loyal customers of 2006 by</text><text x="326" y="1107">revenue</text><text x="582" y="1090">Revenue ($) by genres in 2006</text></g><g font-size="11" font-style="italic"><text x="326" y="886">• Sales in India and China represent 19% of the total revenue in 2006.</text><text x="326" y="900">• 46% of the total revenue stems from Asia.</text><text x="326" y="914">• 25% of the total revenue stems from the Americas.</text></g></g>
          <g><path d="M402 930h694" stroke="#345780" stroke-width="11"/><path d="M402 944h603" stroke="#4b6d98" stroke-width="10"/><path d="M402 958h423" stroke="#7197bd" stroke-width="10"/><path d="M402 972h359M402 986h343M402 1000h336" stroke="#87aacf" stroke-width="10"/><path d="M402 1014h318" stroke="#8db0d4" stroke-width="10"/><path d="M402 1028h255" stroke="#9fc2e0" stroke-width="10"/><path d="M402 1042h173M402 1056h155" stroke="#bcd9ec" stroke-width="10"/></g>
          <g font-size="9" fill="#fff" text-anchor="middle" font-family="Noto Sans"><text x="749" y="933">10%</text><text x="703" y="947">9%</text><text x="613" y="961">6%</text><text x="581" y="975">5%</text><text x="573" y="989">5%</text><text x="570" y="1003">5%</text><text x="561" y="1017">5%</text><text x="530" y="1031">4%</text><text x="488" y="1045">2%</text><text x="479" y="1059">2%</text></g>
          <g font-size="9" fill="#666" text-anchor="end" font-family="Noto Sans"><text x="398" y="934">India</text><text x="398" y="948">China</text><text x="398" y="962">United States</text><text x="398" y="976">Japan</text><text x="398" y="990">Mexico</text><text x="398" y="1004">Brazil</text><text x="398" y="1018">Russian Federati..</text><text x="398" y="1032">Philippines</text><text x="398" y="1046">Turkey</text><text x="398" y="1060">Indonesia</text></g>
          <g font-size="9" fill="#333" font-family="Noto Sans"><text x="984" y="873" font-weight="700">Revenue by country</text><text x="987" y="887">1,353</text><text x="1071" y="887">6,035</text><text x="981" y="1078" font-weight="700">Revenue by genre</text><text x="985" y="1092">48</text><text x="1065" y="1092">4,892</text></g>
          <path d="M990 899h101M988 1103h96" stroke="#777" stroke-width="4"/><g fill="#fff" stroke="#777" stroke-width="2"><circle cx="990" cy="899" r="5"/><circle cx="1091" cy="899" r="5"/><circle cx="988" cy="1103" r="5"/><circle cx="1084" cy="1103" r="5"/></g>
          <rect x="323" y="1073" width="251" height="259" fill="none" stroke="#888" stroke-width="3"/><path d="M323 1131h250M323 1170h250M323 1210h250M323 1250h250M323 1290h250M519 1131v200" stroke="#ddd" stroke-width="2"/>
          <g font-size="9" fill="#555" font-family="Noto Sans"><text x="327" y="1128">First na..</text><text x="370" y="1128">Last na..</text><text x="413" y="1128">Country</text><text x="479" y="1128">City</text><text x="327" y="1154">Arlene</text><text x="370" y="1154">Harvey</text><text x="413" y="1154">India</text><text x="479" y="1154">Ambatt..</text><text x="540" y="1154">111.76</text><text x="327" y="1194">Kyle</text><text x="370" y="1194">Spurlock</text><text x="413" y="1194">China</text><text x="479" y="1194">Shanwei</text><text x="540" y="1194">109.71</text><text x="327" y="1234">Marlene</text><text x="370" y="1234">Welch</text><text x="413" y="1234">Japan</text><text x="479" y="1234">Iwaki</text><text x="540" y="1234">106.77</text><text x="327" y="1273">Glen</text><text x="370" y="1273">Talbert</text><text x="413" y="1273">Mexico</text><text x="479" y="1273">Acua</text><text x="540" y="1273">100.77</text><text x="327" y="1313">Clinton</text><text x="370" y="1313">Buford</text><text x="413" y="1313">United States</text><text x="479" y="1313">Aurora</text><text x="540" y="1313">98.76</text></g>
          <g fill="#4b6d98"><path d="M582 1119h25v138h-25z" fill="#345780"/><path d="M614 1134h25v123h-25zM645 1137h25v120h-25zM676 1141h25v116h-25zM708 1144h25v113h-25zM739 1146h25v111h-25zM770 1146h25v111h-25zM802 1146h25v111h-25zM833 1147h25v110h-25zM864 1151h25v106h-25zM895 1152h25v105h-25z"/><path d="M926 1161h25v96h-25zM957 1163h25v94h-25zM988 1165h25v92h-25zM1019 1167h25v90h-25zM1051 1171h25v86h-25z" fill="#5b80aa"/></g>
          <g font-size="9" font-weight="600" fill="#222" text-anchor="middle" font-family="Noto Sans"><text x="594" y="1115">4,892</text><text x="626" y="1130">4,336</text><text x="657" y="1133">4,245</text><text x="688" y="1137">4,118</text><text x="720" y="1140">4,002</text><text x="751" y="1142">3,966</text><text x="782" y="1142">3,952</text><text x="814" y="1142">3,934</text><text x="845" y="1143">3,922</text><text x="876" y="1147">3,782</text><text x="907" y="1148">3,750</text><text x="938" y="1157">3,401</text><text x="969" y="1159">3,353</text><text x="1000" y="1161">3,309</text><text x="1031" y="1163">3,227</text><text x="1063" y="1167">3,072</text><text x="1094" y="1251">48</text></g>
          <g font-size="9" fill="#555" text-anchor="end" font-family="Noto Sans"><text transform="translate(598 1261) rotate(-90)">Sports</text><text transform="translate(629 1261) rotate(-90)">Sci-Fi</text><text transform="translate(660 1261) rotate(-90)">Animation</text><text transform="translate(692 1261) rotate(-90)">Drama</text><text transform="translate(723 1261) rotate(-90)">Comedy</text><text transform="translate(754 1261) rotate(-90)">New</text><text transform="translate(785 1261) rotate(-90)">Action</text><text transform="translate(817 1261) rotate(-90)">Foreign</text><text transform="translate(848 1261) rotate(-90)">Games</text><text transform="translate(879 1261) rotate(-90)">Family</text><text transform="translate(910 1261) rotate(-90)">Documentary</text><text transform="translate(941 1261) rotate(-90)">Horror</text><text transform="translate(972 1261) rotate(-90)">Classics</text><text transform="translate(1003 1261) rotate(-90)">Children</text><text transform="translate(1034 1261) rotate(-90)">Travel</text><text transform="translate(1066 1261) rotate(-90)">Music</text><text transform="translate(1097 1261) rotate(-90)">Thriller</text></g></svg></li>
        <li><span class="n">22</span><svg class="thumb" viewBox="192 114 1032 564">
          <g fill="none" stroke="#dcd5e3" stroke-width="3"><path d="M536 114q6 52 60 54h220q60-2 66-54M536 678q6-54 60-56h220q60 2 66 56"/></g><g fill="none" stroke="#6d87bd" stroke-width="3"><rect x="227" y="193" width="635" height="470" rx="80"/><rect x="886" y="128" width="331" height="536" rx="55"/></g><path d="M672 172h175" stroke="#fbe0a4" stroke-width="4"/>
          <text class="h" x="209" y="158" font-size="24">Recommendations for launching an online rental service</text>
          <rect x="921" y="150" width="264" height="48" rx="8" fill="#d6cde0"/><g text-anchor="middle" font-weight="700" fill="#3f5593" font-size="20"><text class="h" x="1052" y="182" font-size="26">Additional sources</text><text x="1052" y="234">SQL code:</text><text x="1052" y="357">Final presentation:</text><text x="1046" y="468">Tableau storyboard:</text><text x="1048" y="578">Data dictionary:</text></g>
          <g fill="#41598f" font-size="22" font-weight="500"><text x="265" y="240">Films</text><text x="265" y="336">Market expansion</text><text x="265" y="435">Loyalty program</text><text x="265" y="555">Reduce prices</text></g>
          <g fill="#222" font-size="17" font-weight="500" font-family="Liberation Serif"><text x="265" y="264">Focus on marketing films of the following  popular genres: <tspan fill="#3f5593" font-style="italic">Sports, Sci-Fi, and</tspan></text><text x="265" y="285" fill="#3f5593" font-style="italic">Animation, Comedy, Drama and New.</text><text x="265" y="363">•  Actively advertise in Europe, Africa, and Oceania to attract new customers.</text><text x="265" y="384">•  Keep being active in Asia and the Americas.</text><text x="265" y="465">Introduce a loyalty program – thank your most  loyal customers with discounts</text><text x="265" y="486">and special offers. Especially focus on customers from Europe, Africa, and Oceania,</text><text x="265" y="507">where the customer activity is still low. Remain active in Asia and the Americas.</text><text x="265" y="582">•  Reduce the price for a rental by $0,30 - 0,50 to gain more customers.</text><text x="265" y="603">•  Introduce a subscription service that is more beneficial for customers in terms of</text><text x="284" y="624">costs.</text></g>
          <svg x="1018" y="250" width="52" height="54"><use href="#pg"/></svg><text x="1011" y="320" font-size="13" fill="#55779c">PostgreSQL</text><circle cx="1052" cy="405" r="28" fill="#d9653f"/><path d="M1052 377a28 28 0 0 1 28 28h-28z" fill="#f09a7c"/><rect x="1022" y="390" width="30" height="30" rx="3" fill="#b83c1e"/><text x="1030" y="413" font-size="21" font-weight="700" fill="#fff">P</text><svg x="1022" y="485" width="60" height="60"><use href="#tab"/></svg><rect x="1031" y="597" width="42" height="53" rx="4" fill="#c6cdd2"/><path d="M1037 612h30M1037 624h30M1037 636h20M1034 593v8M1044 593v8M1054 593v8M1064 593v8" stroke="#8c979e" stroke-width="3"/><path d="M1046 634l26-26" stroke="#e0762f" stroke-width="8"/></svg></li>
        <li><span class="n">23</span><svg class="thumb pink" viewBox="192 798 1032 564"><path d="M192 854h190q40 2 54 40" fill="none" stroke="#d8cfdf" stroke-width="4"/><g fill="#fff" stroke="#111" stroke-width="4"><path d="M1072 882l40-36 22 20-20 26zM1110 850l16-10 20 18-8 14z"/><path d="M1126 836q8-14 16-8l20 20q4 8-8 12l-6-6 2-8-12-10z"/></g></svg></li>
      </ol>
    </aside>
    <div class="scroller"></div>
    <section class="editor">
      <div class="canvas">
        <article class="slide">
          <svg class="lines" width="2422" height="1212" viewBox="0 0 2422 1212" fill="none" stroke-width="8"><path d="M0 180h689a108 108 0 0 0 81-180" stroke="#d8cfdf"/><path d="M765 179h227M1800 1070h622M1628 1215q-12-30-1-66" stroke="#fbe0a9"/></svg>
          <h2>Analysis: revenue 2006</h2>
          <div class="dash">
            <div class="dtop">
              <div><h3>Top 10 countries by revenue in 2006</h3>
                <p><span class="navy">• Sales in India and China represent 19% of the total revenue in 2006.</span><br>• 46% of the total revenue stems from Asia.<br>• 25% of the total revenue stems from the Americas.</p></div>
              <div class="range"><b>Revenue by country</b><div class="ends"><span>1,353</span><span>6,035</span></div><div class="dual"><input class="lo" type="range" value="0" aria-label="Lowest revenue by country"><input class="hi" type="range" value="100" aria-label="Highest revenue by country"></div></div>
            </div>
            <div class="hchart">
              <div class="names"><span>India</span><span>China</span><span>United States</span><span>Japan</span><span>Mexico</span><span>Brazil</span><span>Russian Federati..</span><span>Philippines</span><span>Turkey</span><span>Indonesia</span></div>
              <div class="plot">
                <div style="width:100%;background:#345780">10%</div><div style="width:87%;background:#4b6d98">9%</div><div style="width:61%;background:#7197bd">6%</div><div style="width:51.700%;background:#83a6cc">5%</div><div style="width:49.400%;background:#87aacf">5%</div><div style="width:48.400%;background:#89acd2">5%</div><div style="width:45.800%;background:#8db0d4">5%</div><div style="width:36.700%;background:#9fc2e0">4%</div><div style="width:24.900%;background:#b9d7ec">2%</div><div style="width:22.400%;background:#bedcee">2%</div>
              </div>
            </div>
            <div class="dbot">
              <div class="loyal">
                <h3>The most loyal customers of 2006 by&nbsp; revenue</h3>
                <table>
                  <thead><tr><th>First na..</th><th>Last na..</th><th>Country</th><th>City</th><th></th></tr></thead>
                  <tbody>
                    <tr><th>Arlene</th><td>Harvey</td><td>India</td><td>Ambatt..</td><td>111.76</td></tr>
                    <tr><th>Kyle</th><td>Spurlock</td><td>China</td><td>Shanwei</td><td>109.71</td></tr>
                    <tr><th>Marlene</th><td>Welch</td><td>Japan</td><td>Iwaki</td><td>106.77</td></tr>
                    <tr><th>Glen</th><td>Talbert</td><td>Mexico</td><td>Acua</td><td>100.77</td></tr>
                    <tr><th>Clinton</th><td>Buford</td><td>United States</td><td>Aurora</td><td>98.76</td></tr>
                  </tbody>
                </table>
              </div>
              <div class="genres">
                <div class="ghead"><h3>Revenue ($) by genres in 2006&nbsp;</h3>
                <div class="range"><b>Revenue by genre</b><div class="ends"><span>48</span><span>4,892</span></div><div class="dual"><input class="lo" type="range" value="0" aria-label="Lowest revenue by genre"><input class="hi" type="range" value="100" aria-label="Highest revenue by genre"></div></div></div>
                <div class="vplot">
                  <div>4,892<i style="height:270px;background:#345780"></i></div><div>4,336<i style="height:240px;background:#44658f"></i></div><div>4,245<i style="height:234px;background:#45668f"></i></div><div>4,118<i style="height:227px;background:#476993"></i></div><div>4,002<i style="height:222px;background:#4a6b97"></i></div><div>3,966<i style="height:219px;background:#4c6e99"></i></div><div>3,952<i style="height:219px;background:#4c6e99"></i></div><div>3,934<i style="height:218px;background:#4c6e99"></i></div><div>3,922<i style="height:216px;background:#4c6e99"></i></div><div>3,782<i style="height:209px;background:#50749d"></i></div><div>3,750<i style="height:207px;background:#50749d"></i></div><div>3,401<i style="height:188px;background:#5b80aa"></i></div><div>3,353<i style="height:185px;background:#5b80aa"></i></div><div>3,309<i style="height:183px;background:#5b80aa"></i></div><div>3,227<i style="height:178px;background:#5e83ac"></i></div><div>3,072<i style="height:170px;background:#6186ae"></i></div><div>48<i style="height:3px;background:#b9dcec"></i></div>
                </div>
                <div class="vnames"><span>Sports</span><span>Sci-Fi</span><span>Animation</span><span>Drama</span><span>Comedy</span><span>New</span><span>Action</span><span>Foreign</span><span>Games</span><span>Family</span><span>Documentary</span><span>Horror</span><span>Classics</span><span>Children</span><span>Travel</span><span>Music</span><span>Thriller</span></div>
              </div>
            </div>
          </div>
        </article>
      </div>
      <ul class="notes"><li>Click to add notes</li></ul>
    </section>
  </div>

  <div class="status">
    <span>Slide 21 of 39</span>
    <span>English (Germany)</span>
    <button class="acc"><svg width="30" height="32" viewBox="0 0 30 32" fill="none" stroke="#555" stroke-width="2.500"><circle cx="14" cy="5" r="4"/><path d="M2 8q3-2 6 1 6 4 12 0 3-3 6-1-1 4-8 5v6M2 8q1 4 7 6v6L5 31q4 1 6-4l3-6M17 20l11 11M28 20L17 31"/></svg>Accessibility: Investigate</button>
    <div class="views">
      <button><svg width="28" height="26" viewBox="0 0 28 26" stroke="#555" stroke-width="2.500"><path d="M0 12h28M0 18h28M0 24h15"/><path d="M8 6l6-6 6 6z" fill="#555" stroke="none"/></svg>Notes</button>
      <button class="cm"><svg width="28" height="26" viewBox="0 0 28 26" fill="#555"><path d="M0 1h28v18H15l-7 7v-7H0z"/></svg>Comments</button>
      <button class="vw on" aria-label="Normal"><svg width="30" height="26" viewBox="0 0 30 26"><rect x="1.500" y="1.500" width="27" height="23" fill="none" stroke="#fff" stroke-width="3"/><rect x="12" y="8" width="12" height="7" fill="none" stroke="#fff" stroke-width="3"/><path d="M7 2v22M8 19h20" stroke="#fff" stroke-width="2"/></svg></button>
      <button class="vw" aria-label="Sorter"><svg width="32" height="24" viewBox="0 0 32 24" fill="#555"><rect width="13" height="9" rx="2"/><rect x="18" width="13" height="9" rx="2"/><rect y="14" width="13" height="9" rx="2"/><rect x="18" y="14" width="13" height="9" rx="2"/></svg></button>
      <button class="vw" aria-label="Reading"><svg width="32" height="26" viewBox="0 0 32 26" fill="none" stroke="#555" stroke-width="2"><path d="M1 2h10q5 0 5 4 0-4 5-4h10v21H21q-5 0-5 3 0-3-5-3H1zM16 6v18M5 8h7M5 13h7M5 18h7M20 8h7M20 13h7M20 18h7"/></svg></button>
      <button class="vw" aria-label="Slide show"><svg width="32" height="26" viewBox="0 0 32 26" fill="none" stroke="#555" stroke-width="2.500"><path d="M0 2h32M3 3v13h26V3M16 16v8M11 24h10M11 10h10"/></svg></button>
      <button class="pm" aria-label="Zoom out"><svg width="16" height="16" viewBox="0 0 16 16"><path d="M0 8h16" stroke="#555" stroke-width="4"/></svg></button>
      <input class="zoom" type="range" min="0" max="100" value="56" aria-label="Zoom">
      <button class="pm" aria-label="Zoom in"><svg width="16" height="16" viewBox="0 0 16 16"><path d="M0 8h16M8 0v16" stroke="#555" stroke-width="3"/></svg></button>
      <span class="pct">139%</span>
      <button aria-label="Fit"><svg width="28" height="26" viewBox="0 0 28 26" fill="none" stroke="#555" stroke-width="2.200"><rect x="1" y="1" width="26" height="24" rx="2"/><path d="M14 10V4M11 7l3-3 3 3M14 16v6M11 19l3 3 3-3M10 13H4M7 10l-3 3 3 3M18 13h6M21 10l3 3-3 3"/></svg></button>
    </div>
  </div>
</main>

<footer class="desk">
  <div class="backword"><span>Page 1 of 1</span><span>361 words</span><span class="far">English (United States)</span><span class="ag">Accessibility: Good to go</span><span class="end">Focus</span><span class="pc">156%</span></div>
  <div class="backwin"></div>
  <div class="dock">
    <div class="apps">
      <svg viewBox="0 0 74 74"><defs><linearGradient id="fb" x2="0" y2="1"><stop stop-color="#5ec6f6"/><stop offset="1" stop-color="#2f68ea"/></linearGradient><linearGradient id="fg" x2="0" y2="1"><stop stop-color="#f4f5f7"/><stop offset="1" stop-color="#cfd8e3"/></linearGradient></defs><rect width="74" height="74" rx="17" fill="url(#fg)"/><path d="M41 0Q31 20 31 43h12q0 18 3 31H17Q0 74 0 57V17Q0 0 17 0z" fill="url(#fb)"/><path d="M20 21v7M54 21v7" stroke="#222" stroke-width="3" stroke-linecap="round"/><path d="M15 49q22 19 44 0" fill="none" stroke="#1b2230" stroke-width="2.500" stroke-linecap="round"/><circle cx="37" cy="95" r="4"/></svg>
      <svg viewBox="0 0 74 74"><rect width="74" height="74" rx="17" fill="#cfd0d2"/><rect x="12" y="12" width="14" height="14" rx="3" fill="#7ee35c"/><rect x="30" y="12" width="14" height="14" rx="3" fill="#f4bd41"/><rect x="48" y="12" width="14" height="14" rx="3" fill="#ea8b33"/><rect x="12" y="30" width="14" height="14" rx="3" fill="#cf3427"/><rect x="30" y="30" width="14" height="14" rx="3" fill="#a4a8ac"/><rect x="48" y="30" width="14" height="14" rx="3" fill="#ec4a60"/><rect x="12" y="48" width="14" height="14" rx="3" fill="#8e44cf"/><rect x="30" y="48" width="14" height="14" rx="3" fill="#3586f0"/><rect x="48" y="48" width="14" height="14" rx="3" fill="#5fcaa6"/></svg>
      <svg viewBox="0 0 74 74"><rect width="74" height="74" rx="17" fill="#fafafa"/><circle cx="37" cy="37" r="32" fill="#f5c043"/><path d="M37 37L9 21A32 32 0 0 1 65 21H37z" fill="#d9503f"/><path d="M9 21l14 24 14 8L37 69A32 32 0 0 1 9 21z" fill="#4f9f54"/><circle cx="37" cy="37" r="15.500" fill="#fff"/><circle cx="37" cy="37" r="12.500" fill="#4a80ec"/><circle cx="37" cy="95" r="4"/></svg>
      <svg viewBox="0 0 74 74"><rect width="74" height="74" rx="17" fill="#fff"/><g opacity=".85"><rect x="28" y="5" width="18" height="32" rx="9" fill="#f29a38"/><rect x="28" y="5" width="18" height="32" rx="9" fill="#f0d83f" transform="rotate(45 37 37)"/><rect x="28" y="5" width="18" height="32" rx="9" fill="#b9d449" transform="rotate(90 37 37)"/><rect x="28" y="5" width="18" height="32" rx="9" fill="#67ba74" transform="rotate(135 37 37)"/><rect x="28" y="5" width="18" height="32" rx="9" fill="#68a7de" transform="rotate(180 37 37)"/><rect x="28" y="5" width="18" height="32" rx="9" fill="#8c7cc4" transform="rotate(225 37 37)"/><rect x="28" y="5" width="18" height="32" rx="9" fill="#b86ea6" transform="rotate(270 37 37)"/><rect x="28" y="5" width="18" height="32" rx="9" fill="#e8564a" transform="rotate(315 37 37)"/></g></svg>
      <svg viewBox="0 0 74 74"><rect width="74" height="74" rx="17" fill="#f8f7f5"/><path d="M0 23v-6Q0 0 17 0h40q17 0 17 17v6z" fill="#ea6154"/><text x="37" y="17" font-size="14" font-weight="600" fill="#fff" text-anchor="middle">SEP</text><text x="37" y="62" font-size="44" fill="#222" text-anchor="middle">8</text></svg>
      <svg viewBox="0 0 74 74"><rect width="74" height="74" rx="17" fill="#fcfcfb"/><g fill="none" stroke-width="2"><circle cx="14" cy="18" r="6" stroke="#3a7cf0"/><circle cx="14" cy="37" r="6" stroke="#e2483f"/><circle cx="14" cy="55" r="6" stroke="#ef9a37"/></g><circle cx="14" cy="18" r="4" fill="#3a7cf0"/><circle cx="14" cy="37" r="4" fill="#e2483f"/><circle cx="14" cy="55" r="4" fill="#ef9a37"/><path d="M27 18h38M27 37h38M27 55h38" stroke="#b5b5b5" stroke-width="1.500"/></svg>
      <svg viewBox="0 0 74 74"><rect width="74" height="74" rx="17" fill="#f4f3ef"/><path d="M0 19v-2Q0 0 17 0h40q17 0 17 17v2z" fill="#f8ce4a"/><path d="M0 20h74" stroke="#a8a49a" stroke-width="2" stroke-dasharray="2 1"/><path d="M0 37h74M0 55h74" stroke="#d8d8d6" stroke-width="1.500"/></svg>
      <svg viewBox="0 0 74 74"><defs><linearGradient id="pod" x2="0" y2="1"><stop stop-color="#bf62ea"/><stop offset="1" stop-color="#7129b0"/></linearGradient></defs><rect width="74" height="74" rx="17" fill="url(#pod)"/><g fill="none" stroke="#fff" stroke-width="3"><path d="M24 57a25 25 0 1 1 26 0"/><path d="M26 46a16 16 0 1 1 22 0"/></g><circle cx="37" cy="34" r="6" fill="#fff"/><path d="M31 46q6-6 12 0l-2 16q-4 5-8 0z" fill="#fff"/></svg>
      <svg viewBox="0 0 74 74"><rect width="74" height="74" rx="17" fill="#b9bdbf"/><circle cx="37" cy="37" r="30" fill="#8a8d8f" stroke="#333" stroke-width="5" stroke-dasharray="2 1.500"/><circle cx="37" cy="37" r="24" fill="#666a6c" stroke="#1f2122" stroke-width="4"/><path d="M37 37h24M37 37L25 17M37 37L25 57" stroke="#2a2c2d" stroke-width="7"/><path d="M37 37h24M37 37L25 17M37 37L25 57" stroke="#a7abad" stroke-width="3"/><circle cx="37" cy="37" r="5" fill="#333"/><circle cx="68" cy="8" r="17" fill="#e2493c"/><text x="68" y="14" font-size="17" fill="#fff" text-anchor="middle">1</text></svg>
      <svg viewBox="0 0 74 74"><rect width="74" height="74" rx="17" fill="#fff"/><circle cx="37" cy="32" r="15" fill="#1d62b8"/><circle cx="21" cy="43" r="12" fill="#2678cf"/><circle cx="54" cy="43" r="12" fill="#3a95e8"/><path d="M12 51l25-15 27 15q-3 4-9 4H19q-5 0-7-4z" fill="#4aa4ee"/></svg>
      <svg viewBox="0 0 74 74"><rect width="74" height="74" rx="17" fill="#fff"/><circle cx="39" cy="37" r="25" fill="#d5603d"/><path d="M39 12a25 25 0 0 1 25 25H39z" fill="#f19676"/><path d="M39 62a25 25 0 0 0 25-25H39z" fill="#c6502f"/><rect x="10" y="23" width="28" height="28" rx="3" fill="#b83b1d"/><text x="24" y="45" font-size="22" font-weight="700" fill="#fff" text-anchor="middle">P</text><circle cx="37" cy="95" r="4"/></svg>
      <svg viewBox="0 0 74 74"><rect width="74" height="74" rx="17" fill="#fff"/><rect x="19" y="12" width="43" height="49" rx="3" fill="#2b5fc0"/><path d="M19 24V15q0-3 3-3h37q3 0 3 3v9z" fill="#58a3ea"/><path d="M19 24h43v13H19z" fill="#3578d4"/><path d="M19 49h43v9q0 3-3 3H22q-3 0-3-3z" fill="#1e4390"/><rect x="8" y="23" width="28" height="28" rx="3" fill="#2254ae"/><text x="22" y="45" font-size="20" font-weight="700" fill="#fff" text-anchor="middle">W</text><circle cx="37" cy="95" r="4"/></svg>
      <svg viewBox="0 0 74 74"><rect width="74" height="74" rx="17" fill="#fff"/><rect x="19" y="12" width="43" height="49" rx="3" fill="#3c8f5a"/><path d="M40 12h19q3 0 3 3v9H40z" fill="#65bf87"/><path d="M40 24h22v13H40z" fill="#4ba66c"/><path d="M19 49h43v9q0 3-3 3H22q-3 0-3-3z" fill="#28603a"/><rect x="8" y="23" width="28" height="28" rx="3" fill="#256e3c"/><text x="22" y="45" font-size="22" font-weight="700" fill="#fff" text-anchor="middle">X</text><circle cx="37" cy="95" r="4"/></svg>
      <svg viewBox="0 0 74 74"><rect width="74" height="74" rx="17" fill="#fff"/><circle cx="57" cy="22" r="6" fill="#5059c9"/><path d="M46 31h19v14q0 8-9 10-6 0-10-6z" fill="#5059c9"/><circle cx="37" cy="20" r="8" fill="#7b83eb"/><path d="M24 31h28v16q0 14-14 15-14-1-14-15z" fill="#7b83eb"/><rect x="9" y="23" width="28" height="28" rx="3" fill="#4349b4"/><text x="23" y="45" font-size="21" font-weight="700" fill="#fff" text-anchor="middle">T</text></svg>
      <svg viewBox="0 0 74 74"><circle cx="37" cy="37" r="38" fill="#66d36e"/><g fill="none" stroke="#101410" stroke-linecap="round"><path d="M15 24q22-7 45 6" stroke-width="7"/><path d="M17 37q20-6 38 5" stroke-width="6"/><path d="M19 49q17-4 31 4" stroke-width="5"/></g></svg>
      <svg viewBox="0 0 74 74"><rect width="74" height="74" rx="17" fill="#f8f8f8"/><circle cx="37" cy="37" r="32" fill="#4fa7e4"/><path d="M17 37l36-14-7 30-11-8-5 5-2-11 16-12-20 11z" fill="#fff"/></svg>
      <svg viewBox="0 0 74 74"><rect width="74" height="74" rx="17" fill="#fff"/><g stroke-width="10" stroke-linecap="round"><path d="M16 30h15M31 16h0" stroke="#68c5ee"/><path d="M44 16v15M58 30h0" stroke="#5db583"/><path d="M58 44H43M43 58h0" stroke="#e0b14c"/><path d="M30 58V44M16 44h0" stroke="#cf3561"/></g></svg>
      <svg class="sq" viewBox="0 0 80 80"><rect width="80" height="80" fill="#fff"/><g stroke="#4d7fb0" stroke-width="4"><path d="M40 28v24M28 40h24" stroke-width="5"/><path d="M22 15v18M13 24h18M58 15v18M49 24h18M22 47v18M13 56h18M58 47v18M49 56h18"/><path d="M40 7v12M34 13h12M40 61v12M34 67h12M13 34v12M7 40h12M67 34v12M61 40h12" stroke-width="3"/></g><circle cx="40" cy="98" r="4"/></svg>
      <svg viewBox="0 0 74 74"><rect width="74" height="74" rx="17" fill="#d3dde6"/><svg x="9" y="9" width="58" height="58"><use href="#pg"/></svg></svg>
      <svg class="ana" viewBox="0 0 92 92"><circle cx="46" cy="46" r="38" fill="none" stroke="#62b143" stroke-width="15"/><path d="M4 30l22 22M4 55l22-18M12 68l16-10M10 22l24-8M26 4l8 20M4 42l22-16M38 0l10 16" stroke="#6b6d71" stroke-width="2"/></svg>
      <svg viewBox="0 0 74 74"><rect width="74" height="74" rx="17" fill="#7034a0"/><circle cx="37" cy="38" r="31" fill="#5a2a88"/><svg x="6" y="7" width="62" height="62" viewBox="0 0 24 24"><path fill="#fff" d="M12 .297c-6.630 0-12 5.373-12 12 0 5.303 3.438 9.800 8.205 11.385.600.113.820-.258.820-.577 0-.285-.010-1.040-.015-2.040-3.338.724-4.042-1.610-4.042-1.610C4.422 18.070 3.633 17.700 3.633 17.700c-1.087-.744.084-.729.084-.729 1.205.084 1.838 1.236 1.838 1.236 1.070 1.835 2.809 1.305 3.495.998.108-.776.417-1.305.760-1.605-2.665-.300-5.466-1.332-5.466-5.930 0-1.310.465-2.380 1.235-3.220-.135-.303-.540-1.523.105-3.176 0 0 1.005-.322 3.300 1.230.960-.267 1.980-.399 3-.405 1.020.006 2.040.138 3 .405 2.280-1.552 3.285-1.230 3.285-1.230.645 1.653.240 2.873.120 3.176.765.840 1.230 1.910 1.230 3.220 0 4.610-2.805 5.625-5.475 5.920.420.360.810 1.096.810 2.220 0 1.606-.015 2.896-.015 3.286 0 .315.210.690.825.570C20.565 22.092 24 17.592 24 12.297c0-6.627-5.373-12-12-12"/></svg></svg>
    </div>
    <i class="split"></i>
    <div class="recent">
      <svg viewBox="0 0 74 74"><rect width="74" height="74" rx="17" fill="#f2f3f5"/><rect x="5" y="5" width="64" height="64" rx="12" fill="#a9c3ee"/><path d="M5 40h64v17q0 12-12 12H17Q5 69 5 57z" fill="#2f4f80"/><path d="M5 52q20-8 30 6l-4 11H17Q5 69 5 57z" fill="#e8ecef"/><path d="M44 42h22l8 34H36z" fill="#dfe3e6" stroke="#888" stroke-width="2"/><path d="M48 56h14l2 14H45z" fill="#93a3b2"/><rect x="39" y="36" width="32" height="15" rx="4" fill="#1c1c1e"/></svg>
      <svg viewBox="0 0 74 74"><rect width="74" height="74" rx="17" fill="#cfd6da"/><rect x="2" y="2" width="70" height="70" rx="15" fill="#000"/><rect x="8" y="8" width="58" height="58" rx="8" fill="#242426"/><path d="M13 13l8 5-8 5M24 28h12" fill="none" stroke="#fff" stroke-width="2.500"/></svg>
      <svg viewBox="0 0 74 74"><defs><linearGradient id="num" x2="0" y2="1"><stop stop-color="#8bee6c"/><stop offset="1" stop-color="#5bcb45"/></linearGradient></defs><rect width="74" height="74" rx="17" fill="url(#num)"/><g fill="#fff"><rect x="14" y="48" width="9" height="16" rx="2"/><rect x="26" y="35" width="9" height="29" rx="2"/><rect x="39" y="11" width="9" height="53" rx="2"/><rect x="51" y="24" width="9" height="40" rx="2"/></g></svg>
    </div>
    <i class="split"></i>
    <div class="bin">
      <svg width="56" height="86" viewBox="0 0 56 86"><path d="M5 1h38l13 10v75H0V10h5z" fill="#f1f1f1"/><path d="M5 1v10H0M36 1l8 30 11-2M43 1v14l13-4" fill="#fff" stroke="#cfcfcf" stroke-width="1.500"/><path d="M8 10h24M6 20h26M6 25h26M6 30h28M6 35h42M6 40h40M6 45h42M6 55h42M6 60h40M6 65h42M6 70h40M6 76h42" stroke="#a6a6a6" stroke-width="2"/></svg>
      <svg width="68" height="86" viewBox="0 0 68 86"><path d="M2 12l6 62q2 11 26 11t26-11l6-62z" fill="#dedede"/><path d="M12 20l5 60M56 20l-5 60M30 20l2 60" stroke="#ececec" stroke-width="4"/><ellipse cx="34" cy="13" rx="32" ry="9" fill="#b7b7b7"/><path d="M6 12L18 2l8 8 8-9 10 8 14-5 4 12-18 9-12-6-14 6z" fill="#f6f6f6" stroke="#8a8a8a"/><path d="M20 10l8 8 8-7-4-6zM44 6l8 10-10 2z" fill="#405468"/><path d="M30 14l8 4-6 4z" fill="#6fbf5b"/></svg>
    </div>
  </div>
</footer>
</body>
</html>
```
FILE: styles.css
```css
* { box-sizing: border-box; }
html, body { margin: 0; height: 100%; }
body {
  display: flex; flex-direction: column; overflow: hidden;
  font-family: Inter, "Liberation Sans", sans-serif; font-size: 24px; color: #222;
  background: linear-gradient(100deg, #41302a 0, #1d2026 5%, #141a22 40%, #10161c 95%, #3c2a22 100%);
}
button { all: unset; box-sizing: border-box; cursor: default; }
h1, h2, h3, p, ol, ul { margin: 0; padding: 0; }
a { color: inherit; text-decoration: none; }
svg { flex: none; display: block; }
.sprite { position: absolute; width: 0; height: 0; }

/* menu bar */
.menubar {
  height: 50px; padding: 0 39px 2px 40px; display: flex; justify-content: space-between; align-items: center;
  color: #f4ecec; font-size: 26px; border-bottom: 2px solid #2a1e20; white-space: nowrap;
  background: linear-gradient(90deg, #c0715f 0, #b3695e 20%, #9b5d5b 38%, #6f4b53 66%, #4b4052 100%);
}
.menus, .extras { display: flex; align-items: center; }
.menus { gap: 40px; }
.extras { gap: 38px; }
.lang { width: 44px; border: 3px solid; border-radius: 6px; font-size: 20px; line-height: 26px; font-weight: 600; text-align: center; }
.clock { display: flex; gap: 17px; margin-left: -6px; }

/* window */
.window { flex: 1; min-height: 0; display: flex; flex-direction: column; border-radius: 20px; overflow: hidden; background: #ececec; position: relative; z-index: 2; box-shadow: 0 2px 6px #0008; }
.titlebar { height: 64px; flex: none; background: #b5482b; border-top: 2px solid #d88a76; color: #fff; display: grid; grid-template-columns: 1fr auto 1fr; align-items: center; padding: 0 25px; }
.left { display: flex; align-items: center; }
.lights { display: flex; gap: 14px; }
.lights i { width: 26px; height: 26px; border-radius: 50%; border: 1px solid #8f3a24; }
.red { background: radial-gradient(#7b1610 0 4px, #ec6a5e 5px); }
.yellow { background: #f4bf4f; }
.green { background: #61c554; }
.autosave { display: flex; align-items: center; gap: 11px; margin-left: 53px; font-size: 22px; font-weight: 500; color: #fbdfd6; }
.toggle { width: 78px; height: 28px; border-radius: 14px; background: #713423; display: flex; align-items: center; font-size: 17px; }
.toggle input { appearance: none; margin: 0 6px 0 1px; width: 25px; height: 25px; border-radius: 50%; background: #fff; }
.quick { margin-left: 28px; display: flex; align-items: center; gap: 24px; }
.quick .mini { margin: 0 -6px; }
.titlebar svg { fill: none; stroke: #fff; stroke-width: 2.200px; }
.doc { font-size: 26px; font-weight: 700; display: flex; gap: 8px; align-items: center; white-space: nowrap; }
.titlebar .doc svg { stroke: none; }
.right { display: flex; gap: 36px; align-items: center; justify-content: flex-end; }

/* tabs */
.tabs { height: 68px; flex: none; display: flex; justify-content: space-between; padding: 0 21px 0 22px; background: #f5f5f5; }
.tabs nav { display: flex; gap: 48px; font-size: 26px; font-weight: 500; line-height: 30px; padding-top: 14px; white-space: nowrap; }
.tabs .on { font-weight: 700; border-bottom: 6px solid #b5482b; height: 42px; }
.tabs .tell { display: flex; gap: 19px; margin-left: -6px; }
.actions { display: flex; gap: 21px; padding-top: 8px; }
.actions button { height: 48px; border: 2px solid #d3d3d3; border-radius: 6px; background: #fff; color: #b5482b; font-weight: 600; font-size: 24px; padding: 0 13px 0 15px; display: flex; align-items: center; gap: 7px; }
.actions svg { fill: none; stroke: #b5482b; stroke-width: 2.200px; }

/* ribbon */
.ribbon { height: 142px; flex: none; display: flex; border-bottom: 2px solid #c9c9c9; background: linear-gradient(#f5f5f5, #ededed); font-size: 21px; line-height: 24px; color: #111; }
.g { height: 124px; border-right: 2px solid #d2d2d2; display: flex; }
.off { color: #8b8b8b; }
.big { display: flex; flex-direction: column; text-align: center; white-space: nowrap; }
.big .ic { height: 80px; display: flex; align-items: center; justify-content: center; gap: 12px; padding-top: 2px; }
.g-clip .ic { padding-left: 14px; }
.ribbon svg { color: #3b3b3b; }
.ribbon .off svg { color: #ababab; }
.stack { display: grid; grid-template-rows: repeat(3, 44px); }
.stack.two { grid-template-rows: 68px 62px; }
.stack button { display: flex; align-items: center; gap: 12px; }
.g-clip { width: 210px; padding-left: 16px; }
.g-clip .big { width: 102px; }
.g-clip .stack { padding-left: 7px; }
.g-slide { width: 210px; padding-left: 22px; }
.g-slide .big { width: 92px; }
.g-slide .stack { padding-left: 10px; }
.g-font { width: 684px; padding-left: 18px; flex-direction: column; }
.g-para { width: 654px; padding-left: 18px; }
.g-para .big { width: 112px; }
.g-para .row { width: 500px; }
.row { height: 68px; flex: none; display: flex; align-items: center; }
.row + .row { height: 62px; }
.row button { height: 44px; display: flex; align-items: center; justify-content: center; font-size: 26px; color: #b3b3b3; }
.c60 { width: 60px; } .c52 { width: 52px; } .c46 { width: 46px; } .c30 { width: 30px; }
.thin { font-weight: 300; font-size: 28px; }
.row .thin.sm { font-size: 24px; }
.up { align-self: flex-start; margin-top: 4px; }
.row .av { flex-direction: column; }
.av .thin { font-size: 24px; line-height: 24px; }
.row em { font-family: "Liberation Serif", serif; font-size: 28px; }
.row s { font-size: 24px; }
.xx { font-weight: 600; }
.row sup, .row sub { font-size: 15px; color: #a9cbe8; }
.bar { width: 2px; height: 36px; margin: 0 14px; background: #d2d2d2; flex: none; }
.combo { width: 106px; height: 48px; margin: 0 0 0 5px; display: flex; align-items: center; padding: 0 6px 0 10px; background: #fff; border: 2px solid #d3d3d3; border-radius: 6px; }
.combo.wide { width: 344px; margin-left: 2px; }
.ribbon .combo svg { color: #6b6b6b; }
.combo select { appearance: none; flex: 1; min-width: 0; border: 0; background: none; font: 24px Inter, sans-serif; color: #7a7a7a; padding: 0; }
.g-pic { width: 214px; padding-left: 22px; }
.g-pic .big { width: 92px; }
.g-pic .stack, .g-arr .stack { padding-left: 14px; }
.g-arr { width: 314px; padding-left: 22px; }
.g-arr .big { width: 90px; margin-right: 10px; }
.g-arr .big.off { width: 92px; margin-right: 0; }
.g-mid { justify-content: center; width: 156px; }
.g-mid + .g-mid { width: 140px; }
.g-mid.g-mid.last { width: 222px; border: 0; }

/* thumbnails */
.body { flex: 1; min-height: 0; display: grid; grid-template-columns: 448px 9px 1fr; }
.thumbs { overflow: hidden; background: #e2e1df; }
.thumbs ol { list-style: none; display: grid; gap: 36px; margin-top: -108px; }
.thumbs li { height: 192px; display: flex; }
.n { width: 62px; padding-left: 14px; font-size: 26px; line-height: 32px; color: #444; }
.thumb { width: 348px; height: 192px; border: 2px solid #c6c6c6; border-radius: 10px; background: #f5f6fb; }
.thumb.pink { background: #fcf8fe; }
.sel .thumb { outline: 6px solid #ac4d32; }
.thumb text { font-family: Inter, sans-serif; }
.thumb g[font-family="Liberation Serif"] text { font-family: "Liberation Serif", serif; }
.thumb g[font-family="Noto Sans"] text { font-family: "Noto Sans", sans-serif; }
.thumb .h { font-weight: 700; fill: #6f5680; font-feature-settings: "cv11"; }
.thumb .nv text { font-weight: 700; fill: #231d4a; }
.thumb .bd text { font-family: "Liberation Serif", serif; fill: #6b5a80; }
.thumb .bd .lk { fill: #4a70b8; text-decoration: underline; }
.thumb .bd.dk text { font-family: Lato, sans-serif; fill: #333; }
.scroller { background: #f7f7f7; border-right: 2px solid #c6c6c6; }

/* slide */
.editor { display: flex; flex-direction: column; min-width: 0; }
.canvas { flex: 1; min-height: 0; position: relative; overflow: hidden; padding: 62px 188px 24px 187px; display: flex; background: #ebebeb; border-bottom: 2px solid #c9c9c9; }
.slide { flex: 1; position: relative; background: #f5f6fb; box-shadow: 0 0 0 2px #dadada, 0 8px 40px #0002; }
.lines { position: absolute; left: -187px; top: -62px; }
.slide h2 { position: absolute; left: 66px; top: 42px; font-size: 64px; line-height: 80px; font-weight: 700; color: #6f5680; white-space: nowrap; font-feature-settings: "cv11"; }
.dash { position: absolute; inset: 159px 245px 31px 259px; background: #fff; overflow: hidden; display: flex; flex-direction: column; font-family: "Noto Sans", sans-serif; font-size: 17px; color: #333; }
.dash h3 { font: 700 30px/33px "Liberation Serif", serif; text-decoration: underline; color: #333; }
.dtop { height: 132px; display: flex; justify-content: space-between; padding: 1px 20px 0 11px; }
.dtop p { font: italic 22px/27px "Liberation Serif", serif; color: #000; padding-top: 3px; }
.navy { color: #0d1f40; }
.range { width: 220px; line-height: 24px; padding-top: 12px; color: #444; }
.range b { color: #222; font-size: 16px; display: block; }
.ends { display: flex; justify-content: space-between; padding: 5px 4px 0 4px; }
.dual { display: grid; margin: 6px 0 0 4px; height: 22px; align-items: center; background: linear-gradient(#666, #666) center / 100% 6px no-repeat; }
.dual input { grid-area: 1 / 1; appearance: none; margin: 0; width: 100%; background: none; height: 22px; pointer-events: none; }
.dual input::-webkit-slider-thumb { appearance: none; width: 14px; height: 22px; background: #fff; border: 2px solid #777; }
.dual .lo::-webkit-slider-thumb { border-radius: 8px 0 0 8px; }
.dual .hi::-webkit-slider-thumb { border-radius: 0 8px 8px 0; }
.hchart { height: 276px; display: grid; grid-template-columns: 155px 1fr; gap: 8px; }
.names { display: grid; grid-auto-rows: 1fr; align-items: center; text-align: right; color: #555; white-space: nowrap; line-height: 24px; }
.plot { display: grid; grid-auto-rows: 1fr; align-items: center; padding-right: 21px; border-bottom: 2px solid #eee; background: repeating-linear-gradient(to right, #ececec 0 1px, transparent 1px 8.164%); }
.plot div { height: 20px; line-height: 20px; font-size: 18px; color: #fff; text-align: center; }
.dbot { flex: 1; margin-top: 15px; display: grid; grid-template-columns: 495px 1fr; padding: 0 0 2px 5px; }
.loyal { border: 2px solid #111; padding: 7px 3px 0 0; display: flex; flex-direction: column; }
.loyal h3 { font-size: 28px; padding-left: 6px; height: 76px; }
table { border-collapse: collapse; table-layout: fixed; width: 100%; flex: 1; }
thead tr { height: 31px; }
th, td { text-align: left; padding: 0 0 0 8px; font-weight: 400; white-space: nowrap; color: #222; }
thead th { vertical-align: bottom; padding-bottom: 1px; }
thead th:nth-child(1), thead th:nth-child(2) { width: 85px; }
thead th:nth-child(3) { width: 130px; }
thead th:nth-child(4) { width: 85px; }
tbody tr { height: 78px; border: 2px solid #ccc; border-left: 0; }
tbody th { font-weight: 600; color: #333; }
td { color: #777; }
td:last-child { text-align: right; padding-right: 7px; color: #444; border-left: 2px solid #ccc; }
.genres { padding-left: 10px; display: flex; flex-direction: column; min-width: 0; }
.ghead { height: 72px; display: flex; justify-content: space-between; padding: 9px 35px 0 5px; }
.ghead .range { width: 209px; margin-top: -24px; padding-top: 8px; }
.vplot { height: 290px; display: grid; grid-template-columns: repeat(17, 5.930%); align-items: end; color: #000; font-weight: 500; background: repeating-linear-gradient(to top, #eee 0 2px, transparent 2px 111px); }
.vplot div { text-align: center; line-height: 22px; }
.vplot i { display: block; width: 47px; margin: 1px auto 0; }
.vnames { display: grid; grid-template-columns: repeat(17, 5.930%); padding-top: 9px; color: #555; }
.vnames span { writing-mode: vertical-rl; transform: rotate(180deg); justify-self: center; line-height: 24px; margin-bottom: auto; }
.notes { height: 74px; font: 26px/30px "Liberation Sans", sans-serif; color: #000; padding: 15px 0 0 43px; }
.notes li { display: flex; align-items: center; gap: 34px; }
.notes li::before { content: ""; width: 10px; height: 10px; border-radius: 50%; background: #000; }

/* status bar */
.status { height: 46px; flex: none; border-top: 2px solid #9d9d9d; background: linear-gradient(#dedede, #c5c5c5); display: flex; align-items: center; gap: 41px; padding: 0 46px 0 49px; font-size: 24px; color: #4a4a4a; white-space: nowrap; }
.status button { display: flex; align-items: center; gap: 7px; }
.views { margin-left: auto; display: flex; align-items: center; align-self: stretch; }
.views .cm { margin: 0 20px 0 38px; }
.status .vw { width: 73px; align-self: stretch; justify-content: center; }
.status .vw.on { background: #9c9c9c; }
.pm { margin-left: 13px; }
.zoom { appearance: none; width: 200px; height: 32px; margin: 0 0 0 14px; background: linear-gradient(#989898, #989898) center / 100% 8px no-repeat; }
.zoom::-webkit-slider-thumb { appearance: none; width: 32px; height: 32px; border-radius: 50%; background: #f2f2f2; box-shadow: 0 1px 3px #0006; }
.pct { margin: 0 40px 0 34px; }

/* desktop and dock */
.desk { height: 142px; flex: none; position: relative; padding: 10px 84px 10px 83px; }
.backwin { position: absolute; inset: -30px 0 136px 0; border-radius: 0 0 22px 22px; background: #8b8b8b; border-bottom: 1px solid #666; }
.backword { position: absolute; inset: -20px 0 116px 28px; border-radius: 0 0 22px 22px; background: linear-gradient(#555, #8e8e8e); display: flex; align-items: flex-end; gap: 46px; padding: 0 50px 7px 48px; font-size: 23px; line-height: 30px; color: #222; white-space: nowrap; }
.backword .far { margin-left: 60px; }
.backword .ag { margin-left: 32px; }
.backword .end { margin-left: auto; }
.backword .pc { margin-left: 570px; }
.dock { position: relative; z-index: 3; height: 122px; border: 2px solid #88898b; border-radius: 34px; background: linear-gradient(90deg, #717173, #68696e 45%, #62676c); display: flex; padding: 17px 16px; align-items: flex-start; }
.dock svg { filter: drop-shadow(0 2px 2px #0006); }
.apps { flex: 1; display: flex; justify-content: space-between; }
.apps > svg, .recent > svg { width: 74px; height: 74px; overflow: visible; }
.apps > .sq { width: 80px; height: 80px; margin: -3px -3px 0; }
.apps > .ana { width: 92px; height: 92px; margin: -9px -9px 0; }
.split { width: 2px; height: 90px; margin: -3px 34px 0 36px; background: #4a4d51; }
.recent { display: flex; gap: 26px; }
.bin { display: flex; gap: 38px; margin: -6px 3px 0 10px; }
```
